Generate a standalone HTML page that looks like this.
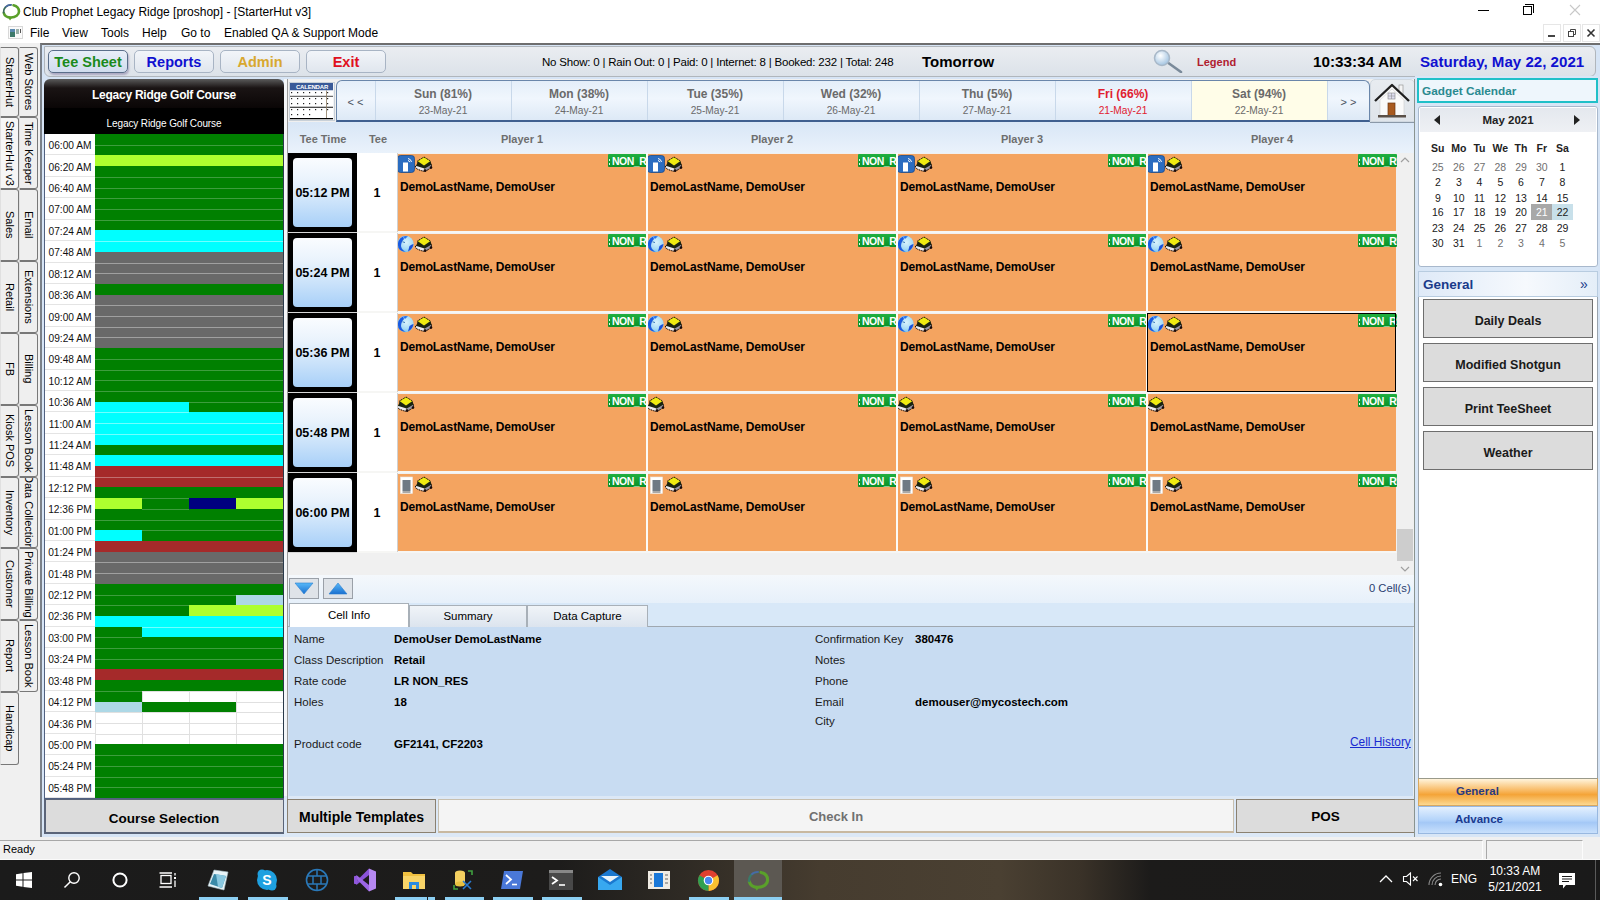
<!DOCTYPE html><html><head><meta charset="utf-8"><title>Club Prophet</title><style>
*{box-sizing:border-box;margin:0;padding:0}
html,body{width:1600px;height:900px;overflow:hidden;background:#f0f0f0;font-family:"Liberation Sans",sans-serif;color:#000}
.ab{position:absolute}
.c{display:flex;align-items:center;justify-content:center;white-space:nowrap}
.b{font-weight:bold}
</style></head><body>
<div class="ab" style="left:0px;top:0px;width:1600px;height:43px;background:#fff"></div>
<svg class="ab" style="left:1px;top:2px" width="20" height="19" viewBox="0 0 20 19">
<path d="M12.5 3.2 C16 4 18 6.5 18 9.5 C18 13 14.5 15.5 10 15.5 C6.5 15.5 3.5 13.8 2.8 11" fill="none" stroke="#5aa02a" stroke-width="2.6" stroke-linecap="round"/>
<path d="M2.6 10.5 C2.2 6 5.5 3 10 2.8" fill="none" stroke="#3a6a5a" stroke-width="1.8" stroke-linecap="round"/>
<path d="M4.5 5 C6 3.5 8 2.8 10.5 2.8" fill="none" stroke="#4a68a8" stroke-width="1.4"/>
<polygon points="6.5,14.5 9,18.5 11.5,15" fill="#5aa02a"/>
</svg>
<div class="ab" style="left:23px;top:5px;white-space:nowrap;font-size:12px;color:#000">Club Prophet Legacy Ridge [proshop] - [StarterHut v3]</div>
<div class="ab" style="left:1478px;top:10px;width:11px;height:1px;background:#000"></div>
<div class="ab" style="left:1523px;top:6px;width:9px;height:9px;border:1px solid #000;background:#fff"></div>
<div class="ab" style="left:1525px;top:4px;width:9px;height:9px;border-top:1px solid #000;border-right:1px solid #000"></div>
<svg class="ab" style="left:1569px;top:4px" width="12" height="12" viewBox="0 0 12 12"><path d="M1 1L11 11M11 1L1 11" stroke="#c8c8c8" stroke-width="1.1"/></svg>
<svg class="ab" style="left:8px;top:26px" width="15" height="13" viewBox="0 0 15 13"><rect x="0.5" y="0.5" width="14" height="12" fill="#fafafa" stroke="#d8d8d8"/><rect x="2" y="3" width="5" height="8" fill="#3e7a6a"/><rect x="2" y="3" width="5" height="3" fill="#5a8ab0"/><rect x="8" y="3" width="3" height="5" fill="#9ab0a8"/><rect x="12" y="3" width="1" height="4" fill="#555"/></svg>
<div class="ab" style="left:30px;top:26px;white-space:nowrap;font-size:12px">File</div>
<div class="ab" style="left:62px;top:26px;white-space:nowrap;font-size:12px">View</div>
<div class="ab" style="left:101px;top:26px;white-space:nowrap;font-size:12px">Tools</div>
<div class="ab" style="left:142px;top:26px;white-space:nowrap;font-size:12px">Help</div>
<div class="ab" style="left:181px;top:26px;white-space:nowrap;font-size:12px">Go to</div>
<div class="ab" style="left:224px;top:26px;white-space:nowrap;font-size:12px">Enabled QA &amp; Support Mode</div>
<div class="ab" style="left:1543px;top:24px;width:18px;height:18px;background:#fff;border:1px solid #e6e6e6"></div>
<div class="ab" style="left:1563px;top:24px;width:18px;height:18px;background:#fff;border:1px solid #e6e6e6"></div>
<div class="ab" style="left:1582px;top:24px;width:18px;height:18px;background:#fff;border:1px solid #e6e6e6"></div>
<div class="ab" style="left:1548px;top:35px;width:7px;height:2px;background:#444"></div>
<svg class="ab" style="left:1567px;top:28px" width="10" height="10" viewBox="0 0 10 10"><rect x="1.5" y="3.5" width="5" height="5" fill="none" stroke="#444"/><path d="M3.5 3.5V1.5H8.5V6.5H6.5" fill="none" stroke="#444"/></svg>
<svg class="ab" style="left:1586px;top:28px" width="10" height="10" viewBox="0 0 10 10"><path d="M1.5 1.5L8.5 8.5M8.5 1.5L1.5 8.5" stroke="#333" stroke-width="1.6"/></svg>
<div class="ab" style="left:0px;top:43px;width:40px;height:797px;background:#f0f0f0"></div>
<div class="ab" style="left:0px;top:47px;width:19px;height:70px;background:#efefef;border:1px solid #787878;border-left:1px solid #e0e0e0;border-radius:0 3px 3px 0;overflow:hidden;display:flex;align-items:center;justify-content:center"><div style="writing-mode:vertical-rl;white-space:nowrap;font-size:11px;line-height:14px;color:#000">StarterHut</div></div>
<div class="ab" style="left:0px;top:117px;width:19px;height:72px;background:#f6f6f6;border:1px solid #787878;border-left:1px solid #e0e0e0;border-radius:0 3px 3px 0;overflow:hidden;display:flex;align-items:center;justify-content:center"><div style="writing-mode:vertical-rl;white-space:nowrap;font-size:11px;line-height:14px;color:#000">StarterHut v3</div></div>
<div class="ab" style="left:0px;top:189px;width:19px;height:72px;background:#efefef;border:1px solid #787878;border-left:1px solid #e0e0e0;border-radius:0 3px 3px 0;overflow:hidden;display:flex;align-items:center;justify-content:center"><div style="writing-mode:vertical-rl;white-space:nowrap;font-size:11px;line-height:14px;color:#000">Sales</div></div>
<div class="ab" style="left:0px;top:261px;width:19px;height:72px;background:#efefef;border:1px solid #787878;border-left:1px solid #e0e0e0;border-radius:0 3px 3px 0;overflow:hidden;display:flex;align-items:center;justify-content:center"><div style="writing-mode:vertical-rl;white-space:nowrap;font-size:11px;line-height:14px;color:#000">Retail</div></div>
<div class="ab" style="left:0px;top:333px;width:19px;height:72px;background:#efefef;border:1px solid #787878;border-left:1px solid #e0e0e0;border-radius:0 3px 3px 0;overflow:hidden;display:flex;align-items:center;justify-content:center"><div style="writing-mode:vertical-rl;white-space:nowrap;font-size:11px;line-height:14px;color:#000">FB</div></div>
<div class="ab" style="left:0px;top:405px;width:19px;height:72px;background:#efefef;border:1px solid #787878;border-left:1px solid #e0e0e0;border-radius:0 3px 3px 0;overflow:hidden;display:flex;align-items:center;justify-content:center"><div style="writing-mode:vertical-rl;white-space:nowrap;font-size:11px;line-height:14px;color:#000">Kiosk POS</div></div>
<div class="ab" style="left:0px;top:477px;width:19px;height:71px;background:#efefef;border:1px solid #787878;border-left:1px solid #e0e0e0;border-radius:0 3px 3px 0;overflow:hidden;display:flex;align-items:center;justify-content:center"><div style="writing-mode:vertical-rl;white-space:nowrap;font-size:11px;line-height:14px;color:#000">Inventory</div></div>
<div class="ab" style="left:0px;top:548px;width:19px;height:72px;background:#efefef;border:1px solid #787878;border-left:1px solid #e0e0e0;border-radius:0 3px 3px 0;overflow:hidden;display:flex;align-items:center;justify-content:center"><div style="writing-mode:vertical-rl;white-space:nowrap;font-size:11px;line-height:14px;color:#000">Customer</div></div>
<div class="ab" style="left:0px;top:620px;width:19px;height:72px;background:#efefef;border:1px solid #787878;border-left:1px solid #e0e0e0;border-radius:0 3px 3px 0;overflow:hidden;display:flex;align-items:center;justify-content:center"><div style="writing-mode:vertical-rl;white-space:nowrap;font-size:11px;line-height:14px;color:#000">Report</div></div>
<div class="ab" style="left:0px;top:692px;width:19px;height:73px;background:#efefef;border:1px solid #787878;border-left:1px solid #e0e0e0;border-radius:0 3px 3px 0;overflow:hidden;display:flex;align-items:center;justify-content:center"><div style="writing-mode:vertical-rl;white-space:nowrap;font-size:11px;line-height:14px;color:#000">Handicap</div></div>
<div class="ab" style="left:19px;top:47px;width:19px;height:70px;background:#efefef;border:1px solid #787878;border-left:1px solid #e0e0e0;border-radius:0 3px 3px 0;overflow:hidden;display:flex;align-items:center;justify-content:center"><div style="writing-mode:vertical-rl;white-space:nowrap;font-size:11px;line-height:14px;color:#000">Web Stores</div></div>
<div class="ab" style="left:19px;top:117px;width:19px;height:72px;background:#efefef;border:1px solid #787878;border-left:1px solid #e0e0e0;border-radius:0 3px 3px 0;overflow:hidden;display:flex;align-items:center;justify-content:center"><div style="writing-mode:vertical-rl;white-space:nowrap;font-size:11px;line-height:14px;color:#000">Time Keeper</div></div>
<div class="ab" style="left:19px;top:189px;width:19px;height:72px;background:#efefef;border:1px solid #787878;border-left:1px solid #e0e0e0;border-radius:0 3px 3px 0;overflow:hidden;display:flex;align-items:center;justify-content:center"><div style="writing-mode:vertical-rl;white-space:nowrap;font-size:11px;line-height:14px;color:#000">Email</div></div>
<div class="ab" style="left:19px;top:261px;width:19px;height:72px;background:#efefef;border:1px solid #787878;border-left:1px solid #e0e0e0;border-radius:0 3px 3px 0;overflow:hidden;display:flex;align-items:center;justify-content:center"><div style="writing-mode:vertical-rl;white-space:nowrap;font-size:11px;line-height:14px;color:#000">Extensions</div></div>
<div class="ab" style="left:19px;top:333px;width:19px;height:72px;background:#efefef;border:1px solid #787878;border-left:1px solid #e0e0e0;border-radius:0 3px 3px 0;overflow:hidden;display:flex;align-items:center;justify-content:center"><div style="writing-mode:vertical-rl;white-space:nowrap;font-size:11px;line-height:14px;color:#000">Billing</div></div>
<div class="ab" style="left:19px;top:405px;width:19px;height:72px;background:#efefef;border:1px solid #787878;border-left:1px solid #e0e0e0;border-radius:0 3px 3px 0;overflow:hidden;display:flex;align-items:center;justify-content:center"><div style="writing-mode:vertical-rl;white-space:nowrap;font-size:11px;line-height:14px;color:#000">Lesson Book</div></div>
<div class="ab" style="left:19px;top:477px;width:19px;height:71px;background:#efefef;border:1px solid #787878;border-left:1px solid #e0e0e0;border-radius:0 3px 3px 0;overflow:hidden;display:flex;align-items:center;justify-content:center"><div style="writing-mode:vertical-rl;white-space:nowrap;font-size:11px;line-height:14px;color:#000">Data Collection</div></div>
<div class="ab" style="left:19px;top:548px;width:19px;height:72px;background:#efefef;border:1px solid #787878;border-left:1px solid #e0e0e0;border-radius:0 3px 3px 0;overflow:hidden;display:flex;align-items:center;justify-content:center"><div style="writing-mode:vertical-rl;white-space:nowrap;font-size:11px;line-height:14px;color:#000">Private Billing</div></div>
<div class="ab" style="left:19px;top:620px;width:19px;height:72px;background:#efefef;border:1px solid #787878;border-left:1px solid #e0e0e0;border-radius:0 3px 3px 0;overflow:hidden;display:flex;align-items:center;justify-content:center"><div style="writing-mode:vertical-rl;white-space:nowrap;font-size:11px;line-height:14px;color:#000">Lesson Book</div></div>
<div class="ab" style="left:40px;top:43px;width:1560px;height:794px;background:#d6e4f5;border-top:2px solid #6e6e6e;border-left:2px solid #7a8088"></div>
<div class="ab" style="left:44px;top:46px;width:1552px;height:31px;background:linear-gradient(#eaedf1,#dce2e9);border:1px solid #b0b6bc;border-radius:0 6px 6px 6px"></div>
<div class="ab c" style="left:48px;top:50px;width:80px;height:23px;border:1px solid #5a6e8a;border-radius:5px;background:linear-gradient(#e8eef8,#d0dcee);box-shadow:1px 2px 2px rgba(80,60,120,.35);font-size:14.5px;font-weight:bold;color:#1a8a1a">Tee Sheet</div>
<div class="ab c" style="left:134px;top:50px;width:80px;height:23px;border:1px solid #a8b4c4;border-radius:5px;background:linear-gradient(#f2f5f9,#e0e6ee);font-size:14.5px;font-weight:bold;color:#1010d0">Reports</div>
<div class="ab c" style="left:220px;top:50px;width:80px;height:23px;border:1px solid #a8b4c4;border-radius:5px;background:linear-gradient(#f2f5f9,#e0e6ee);font-size:14.5px;font-weight:bold;color:#d8a830">Admin</div>
<div class="ab c" style="left:306px;top:50px;width:80px;height:23px;border:1px solid #a8b4c4;border-radius:5px;background:linear-gradient(#f2f5f9,#e0e6ee);font-size:14.5px;font-weight:bold;color:#e01020">Exit</div>
<div class="ab" style="left:542px;top:56px;white-space:nowrap;font-size:11.5px;color:#000;letter-spacing:-0.2px">No Show: 0 | Rain Out: 0 | Paid: 0 | Internet: 8 | Booked: 232 | Total: 248</div>
<div class="ab" style="left:922px;top:53px;white-space:nowrap;font-size:15px;font-weight:bold">Tomorrow</div>
<svg class="ab" style="left:1151px;top:49px" width="32" height="24" viewBox="0 0 32 24"><defs><radialGradient id="mg" cx="0.4" cy="0.35" r="0.7"><stop offset="0" stop-color="#ffffff"/><stop offset="1" stop-color="#9cc0e0"/></radialGradient></defs><line x1="16" y1="13" x2="30" y2="23" stroke="#7a8a9a" stroke-width="2.6" stroke-linecap="round"/><circle cx="11" cy="9" r="7.5" fill="url(#mg)" stroke="#a8b8c8" stroke-width="1.5"/></svg>
<div class="ab" style="left:1197px;top:56px;white-space:nowrap;font-size:11px;font-weight:bold;color:#b02030">Legend</div>
<div class="ab" style="left:1313px;top:53px;white-space:nowrap;font-size:15.3px;font-weight:bold;color:#000">10:33:34 AM</div>
<div class="ab" style="left:1420px;top:53px;white-space:nowrap;font-size:15.1px;font-weight:bold;color:#1010d0">Saturday, May 22, 2021</div>
<div class="ab" style="left:44px;top:79px;width:240px;height:29px;background:linear-gradient(#5a5a5a 0px,#1a1414 9px,#0a0606 100%);border-radius:6px 6px 0 0"></div>
<div class="ab c" style="left:44px;top:81px;width:240px;height:28px;font-size:12px;font-weight:bold;color:#fff;letter-spacing:-0.25px">Legacy Ridge Golf Course</div>
<div class="ab" style="left:44px;top:108px;width:240px;height:26px;background:#000"></div>
<div class="ab c" style="left:44px;top:110px;width:240px;height:26px;font-size:10px;color:#fff;letter-spacing:-0.1px">Legacy Ridge Golf Course</div>
<div class="ab" style="left:44px;top:134px;width:240px;height:664px;background:#fff;border-right:1px solid #a8b8d0"></div>
<div class="ab c" style="left:45px;top:134.00px;width:50px;height:21.42px;padding-top:3px;font-size:10.2px;color:#111;border-bottom:1px solid #e4e4e4">06:00 AM</div>
<div class="ab c" style="left:45px;top:155.42px;width:50px;height:21.42px;padding-top:3px;font-size:10.2px;color:#111;border-bottom:1px solid #e4e4e4">06:20 AM</div>
<div class="ab c" style="left:45px;top:176.84px;width:50px;height:21.42px;padding-top:3px;font-size:10.2px;color:#111;border-bottom:1px solid #e4e4e4">06:40 AM</div>
<div class="ab c" style="left:45px;top:198.26px;width:50px;height:21.42px;padding-top:3px;font-size:10.2px;color:#111;border-bottom:1px solid #e4e4e4">07:00 AM</div>
<div class="ab c" style="left:45px;top:219.68px;width:50px;height:21.42px;padding-top:3px;font-size:10.2px;color:#111;border-bottom:1px solid #e4e4e4">07:24 AM</div>
<div class="ab c" style="left:45px;top:241.10px;width:50px;height:21.42px;padding-top:3px;font-size:10.2px;color:#111;border-bottom:1px solid #e4e4e4">07:48 AM</div>
<div class="ab c" style="left:45px;top:262.52px;width:50px;height:21.42px;padding-top:3px;font-size:10.2px;color:#111;border-bottom:1px solid #e4e4e4">08:12 AM</div>
<div class="ab c" style="left:45px;top:283.94px;width:50px;height:21.42px;padding-top:3px;font-size:10.2px;color:#111;border-bottom:1px solid #e4e4e4">08:36 AM</div>
<div class="ab c" style="left:45px;top:305.35px;width:50px;height:21.42px;padding-top:3px;font-size:10.2px;color:#111;border-bottom:1px solid #e4e4e4">09:00 AM</div>
<div class="ab c" style="left:45px;top:326.77px;width:50px;height:21.42px;padding-top:3px;font-size:10.2px;color:#111;border-bottom:1px solid #e4e4e4">09:24 AM</div>
<div class="ab c" style="left:45px;top:348.19px;width:50px;height:21.42px;padding-top:3px;font-size:10.2px;color:#111;border-bottom:1px solid #e4e4e4">09:48 AM</div>
<div class="ab c" style="left:45px;top:369.61px;width:50px;height:21.42px;padding-top:3px;font-size:10.2px;color:#111;border-bottom:1px solid #e4e4e4">10:12 AM</div>
<div class="ab c" style="left:45px;top:391.03px;width:50px;height:21.42px;padding-top:3px;font-size:10.2px;color:#111;border-bottom:1px solid #e4e4e4">10:36 AM</div>
<div class="ab c" style="left:45px;top:412.45px;width:50px;height:21.42px;padding-top:3px;font-size:10.2px;color:#111;border-bottom:1px solid #e4e4e4">11:00 AM</div>
<div class="ab c" style="left:45px;top:433.87px;width:50px;height:21.42px;padding-top:3px;font-size:10.2px;color:#111;border-bottom:1px solid #e4e4e4">11:24 AM</div>
<div class="ab c" style="left:45px;top:455.29px;width:50px;height:21.42px;padding-top:3px;font-size:10.2px;color:#111;border-bottom:1px solid #e4e4e4">11:48 AM</div>
<div class="ab c" style="left:45px;top:476.71px;width:50px;height:21.42px;padding-top:3px;font-size:10.2px;color:#111;border-bottom:1px solid #e4e4e4">12:12 PM</div>
<div class="ab c" style="left:45px;top:498.13px;width:50px;height:21.42px;padding-top:3px;font-size:10.2px;color:#111;border-bottom:1px solid #e4e4e4">12:36 PM</div>
<div class="ab c" style="left:45px;top:519.55px;width:50px;height:21.42px;padding-top:3px;font-size:10.2px;color:#111;border-bottom:1px solid #e4e4e4">01:00 PM</div>
<div class="ab c" style="left:45px;top:540.97px;width:50px;height:21.42px;padding-top:3px;font-size:10.2px;color:#111;border-bottom:1px solid #e4e4e4">01:24 PM</div>
<div class="ab c" style="left:45px;top:562.39px;width:50px;height:21.42px;padding-top:3px;font-size:10.2px;color:#111;border-bottom:1px solid #e4e4e4">01:48 PM</div>
<div class="ab c" style="left:45px;top:583.81px;width:50px;height:21.42px;padding-top:3px;font-size:10.2px;color:#111;border-bottom:1px solid #e4e4e4">02:12 PM</div>
<div class="ab c" style="left:45px;top:605.23px;width:50px;height:21.42px;padding-top:3px;font-size:10.2px;color:#111;border-bottom:1px solid #e4e4e4">02:36 PM</div>
<div class="ab c" style="left:45px;top:626.65px;width:50px;height:21.42px;padding-top:3px;font-size:10.2px;color:#111;border-bottom:1px solid #e4e4e4">03:00 PM</div>
<div class="ab c" style="left:45px;top:648.06px;width:50px;height:21.42px;padding-top:3px;font-size:10.2px;color:#111;border-bottom:1px solid #e4e4e4">03:24 PM</div>
<div class="ab c" style="left:45px;top:669.48px;width:50px;height:21.42px;padding-top:3px;font-size:10.2px;color:#111;border-bottom:1px solid #e4e4e4">03:48 PM</div>
<div class="ab c" style="left:45px;top:690.90px;width:50px;height:21.42px;padding-top:3px;font-size:10.2px;color:#111;border-bottom:1px solid #e4e4e4">04:12 PM</div>
<div class="ab c" style="left:45px;top:712.32px;width:50px;height:21.42px;padding-top:3px;font-size:10.2px;color:#111;border-bottom:1px solid #e4e4e4">04:36 PM</div>
<div class="ab c" style="left:45px;top:733.74px;width:50px;height:21.42px;padding-top:3px;font-size:10.2px;color:#111;border-bottom:1px solid #e4e4e4">05:00 PM</div>
<div class="ab c" style="left:45px;top:755.16px;width:50px;height:21.42px;padding-top:3px;font-size:10.2px;color:#111;border-bottom:1px solid #e4e4e4">05:24 PM</div>
<div class="ab c" style="left:45px;top:776.58px;width:50px;height:21.42px;padding-top:3px;font-size:10.2px;color:#111;border-bottom:1px solid #e4e4e4">05:48 PM</div>
<div class="ab" style="left:95px;top:134.00px;width:47px;height:11.21px;background:#008000;"></div>
<div class="ab" style="left:142px;top:134.00px;width:47px;height:11.21px;background:#008000;"></div>
<div class="ab" style="left:189px;top:134.00px;width:47px;height:11.21px;background:#008000;"></div>
<div class="ab" style="left:236px;top:134.00px;width:47px;height:11.21px;background:#008000;"></div>
<div class="ab" style="left:95px;top:144.71px;width:47px;height:11.21px;background:#008000;border-top:1px solid #3d9d3d;"></div>
<div class="ab" style="left:142px;top:144.71px;width:47px;height:11.21px;background:#008000;border-top:1px solid #3d9d3d;"></div>
<div class="ab" style="left:189px;top:144.71px;width:47px;height:11.21px;background:#008000;border-top:1px solid #3d9d3d;"></div>
<div class="ab" style="left:236px;top:144.71px;width:47px;height:11.21px;background:#008000;border-top:1px solid #3d9d3d;"></div>
<div class="ab" style="left:95px;top:155.42px;width:47px;height:11.21px;background:#adff2f;"></div>
<div class="ab" style="left:142px;top:155.42px;width:47px;height:11.21px;background:#adff2f;"></div>
<div class="ab" style="left:189px;top:155.42px;width:47px;height:11.21px;background:#adff2f;"></div>
<div class="ab" style="left:236px;top:155.42px;width:47px;height:11.21px;background:#adff2f;"></div>
<div class="ab" style="left:95px;top:166.13px;width:47px;height:11.21px;background:#008000;"></div>
<div class="ab" style="left:142px;top:166.13px;width:47px;height:11.21px;background:#008000;"></div>
<div class="ab" style="left:189px;top:166.13px;width:47px;height:11.21px;background:#008000;"></div>
<div class="ab" style="left:236px;top:166.13px;width:47px;height:11.21px;background:#008000;"></div>
<div class="ab" style="left:95px;top:176.84px;width:47px;height:11.21px;background:#008000;border-top:1px solid #3d9d3d;"></div>
<div class="ab" style="left:142px;top:176.84px;width:47px;height:11.21px;background:#008000;border-top:1px solid #3d9d3d;"></div>
<div class="ab" style="left:189px;top:176.84px;width:47px;height:11.21px;background:#008000;border-top:1px solid #3d9d3d;"></div>
<div class="ab" style="left:236px;top:176.84px;width:47px;height:11.21px;background:#008000;border-top:1px solid #3d9d3d;"></div>
<div class="ab" style="left:95px;top:187.55px;width:47px;height:11.21px;background:#008000;border-top:1px solid #3d9d3d;"></div>
<div class="ab" style="left:142px;top:187.55px;width:47px;height:11.21px;background:#008000;border-top:1px solid #3d9d3d;"></div>
<div class="ab" style="left:189px;top:187.55px;width:47px;height:11.21px;background:#008000;border-top:1px solid #3d9d3d;"></div>
<div class="ab" style="left:236px;top:187.55px;width:47px;height:11.21px;background:#008000;border-top:1px solid #3d9d3d;"></div>
<div class="ab" style="left:95px;top:198.26px;width:47px;height:11.21px;background:#008000;border-top:1px solid #3d9d3d;"></div>
<div class="ab" style="left:142px;top:198.26px;width:47px;height:11.21px;background:#008000;border-top:1px solid #3d9d3d;"></div>
<div class="ab" style="left:189px;top:198.26px;width:47px;height:11.21px;background:#008000;border-top:1px solid #3d9d3d;"></div>
<div class="ab" style="left:236px;top:198.26px;width:47px;height:11.21px;background:#008000;border-top:1px solid #3d9d3d;"></div>
<div class="ab" style="left:95px;top:208.97px;width:47px;height:11.21px;background:#008000;border-top:1px solid #3d9d3d;"></div>
<div class="ab" style="left:142px;top:208.97px;width:47px;height:11.21px;background:#008000;border-top:1px solid #3d9d3d;"></div>
<div class="ab" style="left:189px;top:208.97px;width:47px;height:11.21px;background:#008000;border-top:1px solid #3d9d3d;"></div>
<div class="ab" style="left:236px;top:208.97px;width:47px;height:11.21px;background:#008000;border-top:1px solid #3d9d3d;"></div>
<div class="ab" style="left:95px;top:219.68px;width:47px;height:11.21px;background:#008000;border-top:1px solid #3d9d3d;"></div>
<div class="ab" style="left:142px;top:219.68px;width:47px;height:11.21px;background:#008000;border-top:1px solid #3d9d3d;"></div>
<div class="ab" style="left:189px;top:219.68px;width:47px;height:11.21px;background:#008000;border-top:1px solid #3d9d3d;"></div>
<div class="ab" style="left:236px;top:219.68px;width:47px;height:11.21px;background:#008000;border-top:1px solid #3d9d3d;"></div>
<div class="ab" style="left:95px;top:230.39px;width:47px;height:11.21px;background:#00ffff;"></div>
<div class="ab" style="left:142px;top:230.39px;width:47px;height:11.21px;background:#00ffff;"></div>
<div class="ab" style="left:189px;top:230.39px;width:47px;height:11.21px;background:#00ffff;"></div>
<div class="ab" style="left:236px;top:230.39px;width:47px;height:11.21px;background:#00ffff;"></div>
<div class="ab" style="left:95px;top:241.10px;width:47px;height:11.21px;background:#00ffff;border-top:1px solid #70ffff;"></div>
<div class="ab" style="left:142px;top:241.10px;width:47px;height:11.21px;background:#00ffff;border-top:1px solid #70ffff;"></div>
<div class="ab" style="left:189px;top:241.10px;width:47px;height:11.21px;background:#00ffff;border-top:1px solid #70ffff;"></div>
<div class="ab" style="left:236px;top:241.10px;width:47px;height:11.21px;background:#00ffff;border-top:1px solid #70ffff;"></div>
<div class="ab" style="left:95px;top:251.81px;width:47px;height:11.21px;background:#696969;"></div>
<div class="ab" style="left:142px;top:251.81px;width:47px;height:11.21px;background:#696969;"></div>
<div class="ab" style="left:189px;top:251.81px;width:47px;height:11.21px;background:#696969;"></div>
<div class="ab" style="left:236px;top:251.81px;width:47px;height:11.21px;background:#696969;"></div>
<div class="ab" style="left:95px;top:262.52px;width:47px;height:11.21px;background:#696969;border-top:1px solid #a0a0a0;"></div>
<div class="ab" style="left:142px;top:262.52px;width:47px;height:11.21px;background:#696969;border-top:1px solid #a0a0a0;"></div>
<div class="ab" style="left:189px;top:262.52px;width:47px;height:11.21px;background:#696969;border-top:1px solid #a0a0a0;"></div>
<div class="ab" style="left:236px;top:262.52px;width:47px;height:11.21px;background:#696969;border-top:1px solid #a0a0a0;"></div>
<div class="ab" style="left:95px;top:273.23px;width:47px;height:11.21px;background:#696969;border-top:1px solid #a0a0a0;"></div>
<div class="ab" style="left:142px;top:273.23px;width:47px;height:11.21px;background:#696969;border-top:1px solid #a0a0a0;"></div>
<div class="ab" style="left:189px;top:273.23px;width:47px;height:11.21px;background:#696969;border-top:1px solid #a0a0a0;"></div>
<div class="ab" style="left:236px;top:273.23px;width:47px;height:11.21px;background:#696969;border-top:1px solid #a0a0a0;"></div>
<div class="ab" style="left:95px;top:283.94px;width:47px;height:11.21px;background:#008000;"></div>
<div class="ab" style="left:142px;top:283.94px;width:47px;height:11.21px;background:#008000;"></div>
<div class="ab" style="left:189px;top:283.94px;width:47px;height:11.21px;background:#008000;"></div>
<div class="ab" style="left:236px;top:283.94px;width:47px;height:11.21px;background:#008000;"></div>
<div class="ab" style="left:95px;top:294.65px;width:47px;height:11.21px;background:#696969;"></div>
<div class="ab" style="left:142px;top:294.65px;width:47px;height:11.21px;background:#696969;"></div>
<div class="ab" style="left:189px;top:294.65px;width:47px;height:11.21px;background:#696969;"></div>
<div class="ab" style="left:236px;top:294.65px;width:47px;height:11.21px;background:#696969;"></div>
<div class="ab" style="left:95px;top:305.35px;width:47px;height:11.21px;background:#696969;border-top:1px solid #a0a0a0;"></div>
<div class="ab" style="left:142px;top:305.35px;width:47px;height:11.21px;background:#696969;border-top:1px solid #a0a0a0;"></div>
<div class="ab" style="left:189px;top:305.35px;width:47px;height:11.21px;background:#696969;border-top:1px solid #a0a0a0;"></div>
<div class="ab" style="left:236px;top:305.35px;width:47px;height:11.21px;background:#696969;border-top:1px solid #a0a0a0;"></div>
<div class="ab" style="left:95px;top:316.06px;width:47px;height:11.21px;background:#696969;border-top:1px solid #a0a0a0;"></div>
<div class="ab" style="left:142px;top:316.06px;width:47px;height:11.21px;background:#696969;border-top:1px solid #a0a0a0;"></div>
<div class="ab" style="left:189px;top:316.06px;width:47px;height:11.21px;background:#696969;border-top:1px solid #a0a0a0;"></div>
<div class="ab" style="left:236px;top:316.06px;width:47px;height:11.21px;background:#696969;border-top:1px solid #a0a0a0;"></div>
<div class="ab" style="left:95px;top:326.77px;width:47px;height:11.21px;background:#696969;border-top:1px solid #a0a0a0;"></div>
<div class="ab" style="left:142px;top:326.77px;width:47px;height:11.21px;background:#696969;border-top:1px solid #a0a0a0;"></div>
<div class="ab" style="left:189px;top:326.77px;width:47px;height:11.21px;background:#696969;border-top:1px solid #a0a0a0;"></div>
<div class="ab" style="left:236px;top:326.77px;width:47px;height:11.21px;background:#696969;border-top:1px solid #a0a0a0;"></div>
<div class="ab" style="left:95px;top:337.48px;width:47px;height:11.21px;background:#696969;border-top:1px solid #a0a0a0;"></div>
<div class="ab" style="left:142px;top:337.48px;width:47px;height:11.21px;background:#696969;border-top:1px solid #a0a0a0;"></div>
<div class="ab" style="left:189px;top:337.48px;width:47px;height:11.21px;background:#696969;border-top:1px solid #a0a0a0;"></div>
<div class="ab" style="left:236px;top:337.48px;width:47px;height:11.21px;background:#696969;border-top:1px solid #a0a0a0;"></div>
<div class="ab" style="left:95px;top:348.19px;width:47px;height:11.21px;background:#008000;"></div>
<div class="ab" style="left:142px;top:348.19px;width:47px;height:11.21px;background:#008000;"></div>
<div class="ab" style="left:189px;top:348.19px;width:47px;height:11.21px;background:#008000;"></div>
<div class="ab" style="left:236px;top:348.19px;width:47px;height:11.21px;background:#008000;"></div>
<div class="ab" style="left:95px;top:358.90px;width:47px;height:11.21px;background:#008000;border-top:1px solid #3d9d3d;"></div>
<div class="ab" style="left:142px;top:358.90px;width:47px;height:11.21px;background:#008000;border-top:1px solid #3d9d3d;"></div>
<div class="ab" style="left:189px;top:358.90px;width:47px;height:11.21px;background:#008000;border-top:1px solid #3d9d3d;"></div>
<div class="ab" style="left:236px;top:358.90px;width:47px;height:11.21px;background:#008000;border-top:1px solid #3d9d3d;"></div>
<div class="ab" style="left:95px;top:369.61px;width:47px;height:11.21px;background:#008000;border-top:1px solid #3d9d3d;"></div>
<div class="ab" style="left:142px;top:369.61px;width:47px;height:11.21px;background:#008000;border-top:1px solid #3d9d3d;"></div>
<div class="ab" style="left:189px;top:369.61px;width:47px;height:11.21px;background:#008000;border-top:1px solid #3d9d3d;"></div>
<div class="ab" style="left:236px;top:369.61px;width:47px;height:11.21px;background:#008000;border-top:1px solid #3d9d3d;"></div>
<div class="ab" style="left:95px;top:380.32px;width:47px;height:11.21px;background:#008000;border-top:1px solid #3d9d3d;"></div>
<div class="ab" style="left:142px;top:380.32px;width:47px;height:11.21px;background:#008000;border-top:1px solid #3d9d3d;"></div>
<div class="ab" style="left:189px;top:380.32px;width:47px;height:11.21px;background:#008000;border-top:1px solid #3d9d3d;"></div>
<div class="ab" style="left:236px;top:380.32px;width:47px;height:11.21px;background:#008000;border-top:1px solid #3d9d3d;"></div>
<div class="ab" style="left:95px;top:391.03px;width:47px;height:11.21px;background:#008000;border-top:1px solid #3d9d3d;"></div>
<div class="ab" style="left:142px;top:391.03px;width:47px;height:11.21px;background:#008000;border-top:1px solid #3d9d3d;"></div>
<div class="ab" style="left:189px;top:391.03px;width:47px;height:11.21px;background:#008000;border-top:1px solid #3d9d3d;"></div>
<div class="ab" style="left:236px;top:391.03px;width:47px;height:11.21px;background:#008000;border-top:1px solid #3d9d3d;"></div>
<div class="ab" style="left:95px;top:401.74px;width:47px;height:11.21px;background:#00ffff;"></div>
<div class="ab" style="left:142px;top:401.74px;width:47px;height:11.21px;background:#00ffff;"></div>
<div class="ab" style="left:189px;top:401.74px;width:47px;height:11.21px;background:#008000;border-top:1px solid #3d9d3d;"></div>
<div class="ab" style="left:236px;top:401.74px;width:47px;height:11.21px;background:#008000;border-top:1px solid #3d9d3d;"></div>
<div class="ab" style="left:95px;top:412.45px;width:47px;height:11.21px;background:#00ffff;border-top:1px solid #70ffff;"></div>
<div class="ab" style="left:142px;top:412.45px;width:47px;height:11.21px;background:#00ffff;border-top:1px solid #70ffff;"></div>
<div class="ab" style="left:189px;top:412.45px;width:47px;height:11.21px;background:#00ffff;"></div>
<div class="ab" style="left:236px;top:412.45px;width:47px;height:11.21px;background:#00ffff;"></div>
<div class="ab" style="left:95px;top:423.16px;width:47px;height:11.21px;background:#00ffff;border-top:1px solid #70ffff;"></div>
<div class="ab" style="left:142px;top:423.16px;width:47px;height:11.21px;background:#00ffff;border-top:1px solid #70ffff;"></div>
<div class="ab" style="left:189px;top:423.16px;width:47px;height:11.21px;background:#00ffff;border-top:1px solid #70ffff;"></div>
<div class="ab" style="left:236px;top:423.16px;width:47px;height:11.21px;background:#00ffff;border-top:1px solid #70ffff;"></div>
<div class="ab" style="left:95px;top:433.87px;width:47px;height:11.21px;background:#00ffff;border-top:1px solid #70ffff;"></div>
<div class="ab" style="left:142px;top:433.87px;width:47px;height:11.21px;background:#00ffff;border-top:1px solid #70ffff;"></div>
<div class="ab" style="left:189px;top:433.87px;width:47px;height:11.21px;background:#00ffff;border-top:1px solid #70ffff;"></div>
<div class="ab" style="left:236px;top:433.87px;width:47px;height:11.21px;background:#00ffff;border-top:1px solid #70ffff;"></div>
<div class="ab" style="left:95px;top:444.58px;width:47px;height:11.21px;background:#008000;"></div>
<div class="ab" style="left:142px;top:444.58px;width:47px;height:11.21px;background:#008000;"></div>
<div class="ab" style="left:189px;top:444.58px;width:47px;height:11.21px;background:#008000;"></div>
<div class="ab" style="left:236px;top:444.58px;width:47px;height:11.21px;background:#008000;"></div>
<div class="ab" style="left:95px;top:455.29px;width:47px;height:11.21px;background:#00ffff;"></div>
<div class="ab" style="left:142px;top:455.29px;width:47px;height:11.21px;background:#00ffff;"></div>
<div class="ab" style="left:189px;top:455.29px;width:47px;height:11.21px;background:#00ffff;"></div>
<div class="ab" style="left:236px;top:455.29px;width:47px;height:11.21px;background:#00ffff;"></div>
<div class="ab" style="left:95px;top:466.00px;width:47px;height:11.21px;background:#a52a2a;"></div>
<div class="ab" style="left:142px;top:466.00px;width:47px;height:11.21px;background:#a52a2a;"></div>
<div class="ab" style="left:189px;top:466.00px;width:47px;height:11.21px;background:#a52a2a;"></div>
<div class="ab" style="left:236px;top:466.00px;width:47px;height:11.21px;background:#a52a2a;"></div>
<div class="ab" style="left:95px;top:476.71px;width:47px;height:11.21px;background:#a52a2a;border-top:1px solid #c07070;"></div>
<div class="ab" style="left:142px;top:476.71px;width:47px;height:11.21px;background:#a52a2a;border-top:1px solid #c07070;"></div>
<div class="ab" style="left:189px;top:476.71px;width:47px;height:11.21px;background:#a52a2a;border-top:1px solid #c07070;"></div>
<div class="ab" style="left:236px;top:476.71px;width:47px;height:11.21px;background:#a52a2a;border-top:1px solid #c07070;"></div>
<div class="ab" style="left:95px;top:487.42px;width:47px;height:11.21px;background:#008000;"></div>
<div class="ab" style="left:142px;top:487.42px;width:47px;height:11.21px;background:#008000;"></div>
<div class="ab" style="left:189px;top:487.42px;width:47px;height:11.21px;background:#008000;"></div>
<div class="ab" style="left:236px;top:487.42px;width:47px;height:11.21px;background:#008000;"></div>
<div class="ab" style="left:95px;top:498.13px;width:47px;height:11.21px;background:#adff2f;"></div>
<div class="ab" style="left:142px;top:498.13px;width:47px;height:11.21px;background:#008000;border-top:1px solid #3d9d3d;"></div>
<div class="ab" style="left:189px;top:498.13px;width:47px;height:11.21px;background:#000080;"></div>
<div class="ab" style="left:236px;top:498.13px;width:47px;height:11.21px;background:#adff2f;"></div>
<div class="ab" style="left:95px;top:508.84px;width:47px;height:11.21px;background:#008000;"></div>
<div class="ab" style="left:142px;top:508.84px;width:47px;height:11.21px;background:#008000;border-top:1px solid #3d9d3d;"></div>
<div class="ab" style="left:189px;top:508.84px;width:47px;height:11.21px;background:#008000;"></div>
<div class="ab" style="left:236px;top:508.84px;width:47px;height:11.21px;background:#008000;"></div>
<div class="ab" style="left:95px;top:519.55px;width:47px;height:11.21px;background:#008000;border-top:1px solid #3d9d3d;"></div>
<div class="ab" style="left:142px;top:519.55px;width:47px;height:11.21px;background:#008000;border-top:1px solid #3d9d3d;"></div>
<div class="ab" style="left:189px;top:519.55px;width:47px;height:11.21px;background:#008000;border-top:1px solid #3d9d3d;"></div>
<div class="ab" style="left:236px;top:519.55px;width:47px;height:11.21px;background:#008000;border-top:1px solid #3d9d3d;"></div>
<div class="ab" style="left:95px;top:530.26px;width:47px;height:11.21px;background:#00ffff;"></div>
<div class="ab" style="left:142px;top:530.26px;width:47px;height:11.21px;background:#008000;border-top:1px solid #3d9d3d;"></div>
<div class="ab" style="left:189px;top:530.26px;width:47px;height:11.21px;background:#008000;border-top:1px solid #3d9d3d;"></div>
<div class="ab" style="left:236px;top:530.26px;width:47px;height:11.21px;background:#008000;border-top:1px solid #3d9d3d;"></div>
<div class="ab" style="left:95px;top:540.97px;width:47px;height:11.21px;background:#a52a2a;"></div>
<div class="ab" style="left:142px;top:540.97px;width:47px;height:11.21px;background:#a52a2a;"></div>
<div class="ab" style="left:189px;top:540.97px;width:47px;height:11.21px;background:#a52a2a;"></div>
<div class="ab" style="left:236px;top:540.97px;width:47px;height:11.21px;background:#a52a2a;"></div>
<div class="ab" style="left:95px;top:551.68px;width:47px;height:11.21px;background:#696969;"></div>
<div class="ab" style="left:142px;top:551.68px;width:47px;height:11.21px;background:#696969;"></div>
<div class="ab" style="left:189px;top:551.68px;width:47px;height:11.21px;background:#696969;"></div>
<div class="ab" style="left:236px;top:551.68px;width:47px;height:11.21px;background:#696969;"></div>
<div class="ab" style="left:95px;top:562.39px;width:47px;height:11.21px;background:#696969;border-top:1px solid #a0a0a0;"></div>
<div class="ab" style="left:142px;top:562.39px;width:47px;height:11.21px;background:#696969;border-top:1px solid #a0a0a0;"></div>
<div class="ab" style="left:189px;top:562.39px;width:47px;height:11.21px;background:#696969;border-top:1px solid #a0a0a0;"></div>
<div class="ab" style="left:236px;top:562.39px;width:47px;height:11.21px;background:#696969;border-top:1px solid #a0a0a0;"></div>
<div class="ab" style="left:95px;top:573.10px;width:47px;height:11.21px;background:#696969;border-top:1px solid #a0a0a0;"></div>
<div class="ab" style="left:142px;top:573.10px;width:47px;height:11.21px;background:#696969;border-top:1px solid #a0a0a0;"></div>
<div class="ab" style="left:189px;top:573.10px;width:47px;height:11.21px;background:#696969;border-top:1px solid #a0a0a0;"></div>
<div class="ab" style="left:236px;top:573.10px;width:47px;height:11.21px;background:#696969;border-top:1px solid #a0a0a0;"></div>
<div class="ab" style="left:95px;top:583.81px;width:47px;height:11.21px;background:#008000;"></div>
<div class="ab" style="left:142px;top:583.81px;width:47px;height:11.21px;background:#008000;"></div>
<div class="ab" style="left:189px;top:583.81px;width:47px;height:11.21px;background:#008000;"></div>
<div class="ab" style="left:236px;top:583.81px;width:47px;height:11.21px;background:#008000;"></div>
<div class="ab" style="left:95px;top:594.52px;width:47px;height:11.21px;background:#008000;border-top:1px solid #3d9d3d;"></div>
<div class="ab" style="left:142px;top:594.52px;width:47px;height:11.21px;background:#008000;border-top:1px solid #3d9d3d;"></div>
<div class="ab" style="left:189px;top:594.52px;width:47px;height:11.21px;background:#008000;border-top:1px solid #3d9d3d;"></div>
<div class="ab" style="left:236px;top:594.52px;width:47px;height:11.21px;background:#add8e6;"></div>
<div class="ab" style="left:95px;top:605.23px;width:47px;height:11.21px;background:#008000;border-top:1px solid #3d9d3d;"></div>
<div class="ab" style="left:142px;top:605.23px;width:47px;height:11.21px;background:#008000;border-top:1px solid #3d9d3d;"></div>
<div class="ab" style="left:189px;top:605.23px;width:47px;height:11.21px;background:#adff2f;"></div>
<div class="ab" style="left:236px;top:605.23px;width:47px;height:11.21px;background:#adff2f;"></div>
<div class="ab" style="left:95px;top:615.94px;width:47px;height:11.21px;background:#00ffff;"></div>
<div class="ab" style="left:142px;top:615.94px;width:47px;height:11.21px;background:#00ffff;"></div>
<div class="ab" style="left:189px;top:615.94px;width:47px;height:11.21px;background:#00ffff;"></div>
<div class="ab" style="left:236px;top:615.94px;width:47px;height:11.21px;background:#00ffff;"></div>
<div class="ab" style="left:95px;top:626.65px;width:47px;height:11.21px;background:#008000;"></div>
<div class="ab" style="left:142px;top:626.65px;width:47px;height:11.21px;background:#00ffff;border-top:1px solid #70ffff;"></div>
<div class="ab" style="left:189px;top:626.65px;width:47px;height:11.21px;background:#00ffff;border-top:1px solid #70ffff;"></div>
<div class="ab" style="left:236px;top:626.65px;width:47px;height:11.21px;background:#00ffff;border-top:1px solid #70ffff;"></div>
<div class="ab" style="left:95px;top:637.35px;width:47px;height:11.21px;background:#008000;border-top:1px solid #3d9d3d;"></div>
<div class="ab" style="left:142px;top:637.35px;width:47px;height:11.21px;background:#008000;"></div>
<div class="ab" style="left:189px;top:637.35px;width:47px;height:11.21px;background:#008000;"></div>
<div class="ab" style="left:236px;top:637.35px;width:47px;height:11.21px;background:#008000;"></div>
<div class="ab" style="left:95px;top:648.06px;width:47px;height:11.21px;background:#008000;border-top:1px solid #3d9d3d;"></div>
<div class="ab" style="left:142px;top:648.06px;width:47px;height:11.21px;background:#008000;border-top:1px solid #3d9d3d;"></div>
<div class="ab" style="left:189px;top:648.06px;width:47px;height:11.21px;background:#008000;border-top:1px solid #3d9d3d;"></div>
<div class="ab" style="left:236px;top:648.06px;width:47px;height:11.21px;background:#008000;border-top:1px solid #3d9d3d;"></div>
<div class="ab" style="left:95px;top:658.77px;width:47px;height:11.21px;background:#008000;border-top:1px solid #3d9d3d;"></div>
<div class="ab" style="left:142px;top:658.77px;width:47px;height:11.21px;background:#008000;border-top:1px solid #3d9d3d;"></div>
<div class="ab" style="left:189px;top:658.77px;width:47px;height:11.21px;background:#008000;border-top:1px solid #3d9d3d;"></div>
<div class="ab" style="left:236px;top:658.77px;width:47px;height:11.21px;background:#008000;border-top:1px solid #3d9d3d;"></div>
<div class="ab" style="left:95px;top:669.48px;width:47px;height:11.21px;background:#a52a2a;"></div>
<div class="ab" style="left:142px;top:669.48px;width:47px;height:11.21px;background:#a52a2a;"></div>
<div class="ab" style="left:189px;top:669.48px;width:47px;height:11.21px;background:#a52a2a;"></div>
<div class="ab" style="left:236px;top:669.48px;width:47px;height:11.21px;background:#a52a2a;"></div>
<div class="ab" style="left:95px;top:680.19px;width:47px;height:11.21px;background:#008000;"></div>
<div class="ab" style="left:142px;top:680.19px;width:47px;height:11.21px;background:#008000;"></div>
<div class="ab" style="left:189px;top:680.19px;width:47px;height:11.21px;background:#008000;"></div>
<div class="ab" style="left:236px;top:680.19px;width:47px;height:11.21px;background:#008000;"></div>
<div class="ab" style="left:95px;top:690.90px;width:47px;height:11.21px;background:#008000;border-top:1px solid #3d9d3d;"></div>
<div class="ab" style="left:142px;top:690.90px;width:47px;height:11.21px;background:#ffffff;border-top:1px solid #e0e0e0;border-left:1px solid #e0e0e0;"></div>
<div class="ab" style="left:189px;top:690.90px;width:47px;height:11.21px;background:#ffffff;border-top:1px solid #e0e0e0;border-left:1px solid #e0e0e0;"></div>
<div class="ab" style="left:236px;top:690.90px;width:47px;height:11.21px;background:#ffffff;border-top:1px solid #e0e0e0;border-left:1px solid #e0e0e0;"></div>
<div class="ab" style="left:95px;top:701.61px;width:47px;height:11.21px;background:#add8e6;"></div>
<div class="ab" style="left:142px;top:701.61px;width:47px;height:11.21px;background:#008000;"></div>
<div class="ab" style="left:189px;top:701.61px;width:47px;height:11.21px;background:#008000;"></div>
<div class="ab" style="left:236px;top:701.61px;width:47px;height:11.21px;background:#ffffff;border-top:1px solid #e0e0e0;border-left:1px solid #e0e0e0;"></div>
<div class="ab" style="left:95px;top:712.32px;width:47px;height:11.21px;background:#ffffff;border-top:1px solid #e0e0e0;border-left:1px solid #e0e0e0;"></div>
<div class="ab" style="left:142px;top:712.32px;width:47px;height:11.21px;background:#ffffff;border-top:1px solid #e0e0e0;border-left:1px solid #e0e0e0;"></div>
<div class="ab" style="left:189px;top:712.32px;width:47px;height:11.21px;background:#ffffff;border-top:1px solid #e0e0e0;border-left:1px solid #e0e0e0;"></div>
<div class="ab" style="left:236px;top:712.32px;width:47px;height:11.21px;background:#ffffff;border-top:1px solid #e0e0e0;border-left:1px solid #e0e0e0;"></div>
<div class="ab" style="left:95px;top:723.03px;width:47px;height:11.21px;background:#ffffff;border-top:1px solid #e0e0e0;border-left:1px solid #e0e0e0;"></div>
<div class="ab" style="left:142px;top:723.03px;width:47px;height:11.21px;background:#ffffff;border-top:1px solid #e0e0e0;border-left:1px solid #e0e0e0;"></div>
<div class="ab" style="left:189px;top:723.03px;width:47px;height:11.21px;background:#ffffff;border-top:1px solid #e0e0e0;border-left:1px solid #e0e0e0;"></div>
<div class="ab" style="left:236px;top:723.03px;width:47px;height:11.21px;background:#ffffff;border-top:1px solid #e0e0e0;border-left:1px solid #e0e0e0;"></div>
<div class="ab" style="left:95px;top:733.74px;width:47px;height:11.21px;background:#ffffff;border-top:1px solid #e0e0e0;border-left:1px solid #e0e0e0;"></div>
<div class="ab" style="left:142px;top:733.74px;width:47px;height:11.21px;background:#ffffff;border-top:1px solid #e0e0e0;border-left:1px solid #e0e0e0;"></div>
<div class="ab" style="left:189px;top:733.74px;width:47px;height:11.21px;background:#ffffff;border-top:1px solid #e0e0e0;border-left:1px solid #e0e0e0;"></div>
<div class="ab" style="left:236px;top:733.74px;width:47px;height:11.21px;background:#ffffff;border-top:1px solid #e0e0e0;border-left:1px solid #e0e0e0;"></div>
<div class="ab" style="left:95px;top:744.45px;width:47px;height:11.21px;background:#008000;"></div>
<div class="ab" style="left:142px;top:744.45px;width:47px;height:11.21px;background:#008000;"></div>
<div class="ab" style="left:189px;top:744.45px;width:47px;height:11.21px;background:#008000;"></div>
<div class="ab" style="left:236px;top:744.45px;width:47px;height:11.21px;background:#008000;"></div>
<div class="ab" style="left:95px;top:755.16px;width:47px;height:11.21px;background:#008000;border-top:1px solid #3d9d3d;"></div>
<div class="ab" style="left:142px;top:755.16px;width:47px;height:11.21px;background:#008000;border-top:1px solid #3d9d3d;"></div>
<div class="ab" style="left:189px;top:755.16px;width:47px;height:11.21px;background:#008000;border-top:1px solid #3d9d3d;"></div>
<div class="ab" style="left:236px;top:755.16px;width:47px;height:11.21px;background:#008000;border-top:1px solid #3d9d3d;"></div>
<div class="ab" style="left:95px;top:765.87px;width:47px;height:11.21px;background:#008000;border-top:1px solid #3d9d3d;"></div>
<div class="ab" style="left:142px;top:765.87px;width:47px;height:11.21px;background:#008000;border-top:1px solid #3d9d3d;"></div>
<div class="ab" style="left:189px;top:765.87px;width:47px;height:11.21px;background:#008000;border-top:1px solid #3d9d3d;"></div>
<div class="ab" style="left:236px;top:765.87px;width:47px;height:11.21px;background:#008000;border-top:1px solid #3d9d3d;"></div>
<div class="ab" style="left:95px;top:776.58px;width:47px;height:11.21px;background:#008000;border-top:1px solid #3d9d3d;"></div>
<div class="ab" style="left:142px;top:776.58px;width:47px;height:11.21px;background:#008000;border-top:1px solid #3d9d3d;"></div>
<div class="ab" style="left:189px;top:776.58px;width:47px;height:11.21px;background:#008000;border-top:1px solid #3d9d3d;"></div>
<div class="ab" style="left:236px;top:776.58px;width:47px;height:11.21px;background:#008000;border-top:1px solid #3d9d3d;"></div>
<div class="ab" style="left:95px;top:787.29px;width:47px;height:11.21px;background:#008000;border-top:1px solid #3d9d3d;"></div>
<div class="ab" style="left:142px;top:787.29px;width:47px;height:11.21px;background:#008000;border-top:1px solid #3d9d3d;"></div>
<div class="ab" style="left:189px;top:787.29px;width:47px;height:11.21px;background:#008000;border-top:1px solid #3d9d3d;"></div>
<div class="ab" style="left:236px;top:787.29px;width:47px;height:11.21px;background:#008000;border-top:1px solid #3d9d3d;"></div>
<div class="ab" style="left:283px;top:134px;width:1px;height:664px;background:#2a3a4a"></div>
<div class="ab" style="left:44px;top:134px;width:1px;height:665px;background:#506080"></div>
<div class="ab" style="left:44px;top:798px;width:240px;height:1px;background:#506080"></div>
<div class="ab" style="left:284px;top:79px;width:3px;height:720px;background:#f4f6f8"></div>
<div class="ab" style="left:44px;top:799px;width:240px;height:35px;background:#dcdcdc;border:1px solid #5a6478;border-left:2px solid #5a6478;border-bottom:2px solid #5a6478"></div>
<div class="ab c" style="left:44px;top:801px;width:240px;height:34px;font-size:13.5px;font-weight:bold;color:#000">Course Selection</div>
<div class="ab" style="left:287px;top:79px;width:1128px;height:496px;background:#f0f0f0"></div>
<svg class="ab" style="left:289px;top:82px" width="46" height="39" viewBox="0 0 46 39">
<rect x="0.5" y="0.5" width="45" height="38" fill="#f2f4f6" stroke="#c8d0d8"/>
<g transform="translate(1,1)">
<rect x="0" y="0" width="43" height="7.5" fill="#3a5a98"/>
<text x="22" y="6.3" font-family="Liberation Sans" font-size="6" font-weight="bold" fill="#fff" text-anchor="middle" letter-spacing="-0.2">CALENDAR</text>
<rect x="0" y="7.5" width="43" height="29" fill="#fff"/>
<line x1="0" y1="13.3" x2="43" y2="13.3" stroke="#333" stroke-width="0.9"/>
<line x1="0" y1="24.3" x2="43" y2="24.3" stroke="#111" stroke-width="1.1"/>
<line x1="0" y1="35.6" x2="43" y2="35.6" stroke="#000" stroke-width="1.4"/>
<line x1="36.5" y1="7.5" x2="36.5" y2="35" stroke="#8a7a60" stroke-width="0.8"/>
<g fill="#222"><rect x="1" y="9.0" width="1.2" height="1.2"/><rect x="7" y="9.0" width="1.2" height="1.2"/><rect x="13" y="9.0" width="1.2" height="1.2"/><rect x="19" y="9.0" width="1.2" height="1.2"/><rect x="25" y="9.0" width="1.2" height="1.2"/><rect x="31" y="9.0" width="1.2" height="1.2"/><rect x="37" y="9.0" width="1.2" height="1.2"/><rect x="1" y="15.0" width="1.2" height="1.2"/><rect x="7" y="15.0" width="1.2" height="1.2"/><rect x="13" y="15.0" width="1.2" height="1.2"/><rect x="19" y="15.0" width="1.2" height="1.2"/><rect x="25" y="15.0" width="1.2" height="1.2"/><rect x="31" y="15.0" width="1.2" height="1.2"/><rect x="37" y="15.0" width="1.2" height="1.2"/><rect x="1" y="20.0" width="1.2" height="1.2"/><rect x="7" y="20.0" width="1.2" height="1.2"/><rect x="13" y="20.0" width="1.2" height="1.2"/><rect x="19" y="20.0" width="1.2" height="1.2"/><rect x="25" y="20.0" width="1.2" height="1.2"/><rect x="31" y="20.0" width="1.2" height="1.2"/><rect x="37" y="20.0" width="1.2" height="1.2"/><rect x="1" y="26.0" width="1.2" height="1.2"/><rect x="7" y="26.0" width="1.2" height="1.2"/><rect x="13" y="26.0" width="1.2" height="1.2"/><rect x="19" y="26.0" width="1.2" height="1.2"/><rect x="25" y="26.0" width="1.2" height="1.2"/><rect x="31" y="26.0" width="1.2" height="1.2"/><rect x="37" y="26.0" width="1.2" height="1.2"/><rect x="1" y="31" width="1.2" height="1.2"/><rect x="7" y="31" width="1.2" height="1.2"/><rect x="13" y="31" width="1.2" height="1.2"/><rect x="19" y="31" width="1.2" height="1.2"/></g></g>
</svg>
<div class="ab" style="left:336px;top:80px;width:1034px;height:42px;background:linear-gradient(#e4eef9,#f0f6fd 45%,#dde9f6);border:1px solid #6a86aa;border-bottom:2px solid #3f5f8f;border-radius:6px 6px 0 0"></div>
<div class="ab c" style="left:336px;top:82px;width:39px;height:40px;font-size:11px;color:#4a5260">&lt; &lt;</div>
<div class="ab" style="left:375px;top:81px;width:1px;height:39px;background:#c8d8ea"></div>
<div class="ab" style="left:511px;top:81px;width:1px;height:39px;background:#c8d8ea"></div>
<div class="ab c" style="left:375px;top:85px;width:136px;height:18px;font-size:12px;font-weight:bold;color:#6a6a6a">Sun (81%)</div>
<div class="ab c" style="left:375px;top:103px;width:136px;height:15px;font-size:10.2px;color:#6a6a6a">23-May-21</div>
<div class="ab" style="left:647px;top:81px;width:1px;height:39px;background:#c8d8ea"></div>
<div class="ab c" style="left:511px;top:85px;width:136px;height:18px;font-size:12px;font-weight:bold;color:#6a6a6a">Mon (38%)</div>
<div class="ab c" style="left:511px;top:103px;width:136px;height:15px;font-size:10.2px;color:#6a6a6a">24-May-21</div>
<div class="ab" style="left:783px;top:81px;width:1px;height:39px;background:#c8d8ea"></div>
<div class="ab c" style="left:647px;top:85px;width:136px;height:18px;font-size:12px;font-weight:bold;color:#6a6a6a">Tue (35%)</div>
<div class="ab c" style="left:647px;top:103px;width:136px;height:15px;font-size:10.2px;color:#6a6a6a">25-May-21</div>
<div class="ab" style="left:919px;top:81px;width:1px;height:39px;background:#c8d8ea"></div>
<div class="ab c" style="left:783px;top:85px;width:136px;height:18px;font-size:12px;font-weight:bold;color:#6a6a6a">Wed (32%)</div>
<div class="ab c" style="left:783px;top:103px;width:136px;height:15px;font-size:10.2px;color:#6a6a6a">26-May-21</div>
<div class="ab" style="left:1055px;top:81px;width:1px;height:39px;background:#c8d8ea"></div>
<div class="ab c" style="left:919px;top:85px;width:136px;height:18px;font-size:12px;font-weight:bold;color:#6a6a6a">Thu (5%)</div>
<div class="ab c" style="left:919px;top:103px;width:136px;height:15px;font-size:10.2px;color:#6a6a6a">27-May-21</div>
<div class="ab" style="left:1191px;top:81px;width:1px;height:39px;background:#c8d8ea"></div>
<div class="ab c" style="left:1055px;top:85px;width:136px;height:18px;font-size:12px;font-weight:bold;color:#e02030">Fri (66%)</div>
<div class="ab c" style="left:1055px;top:103px;width:136px;height:15px;font-size:10.2px;color:#e02030">21-May-21</div>
<div class="ab" style="left:1192px;top:81px;width:135px;height:39px;background:#fffde8"></div>
<div class="ab c" style="left:1191px;top:85px;width:136px;height:18px;font-size:12px;font-weight:bold;color:#6a6a6a">Sat (94%)</div>
<div class="ab c" style="left:1191px;top:103px;width:136px;height:15px;font-size:10.2px;color:#6a6a6a">22-May-21</div>
<div class="ab" style="left:1327px;top:81px;width:1px;height:39px;background:#c8d8ea"></div>
<div class="ab c" style="left:1327px;top:82px;width:43px;height:40px;font-size:11px;color:#4a5260">&gt; &gt;</div>
<div class="ab" style="left:1370px;top:79px;width:45px;height:43px;background:linear-gradient(#e8ecf0,#dfe4ea);border:1px solid #d0d8e0;border-radius:5px 5px 0 0"></div>
<svg class="ab" style="left:1373px;top:82px" width="38" height="37" viewBox="0 0 38 37">
<rect x="26" y="3" width="4" height="10" fill="#f4f4f4" stroke="#999" stroke-width="0.7"/>
<polygon points="19,3 3,18 7,18 7,34 31,34 31,18 35,18" fill="#f8f8f8"/>
<polygon points="7,18 19,7 31,18 31,34 7,34" fill="#fafafa" stroke="#cfcfcf" stroke-width="0.6"/>
<path d="M2 19 L19 3 L36 19" fill="none" stroke="#202020" stroke-width="2.4" stroke-linejoin="round"/>
<rect x="15" y="21" width="7" height="13" fill="#a85a20" stroke="#6a3410" stroke-width="0.7"/>
<rect x="15" y="11" width="7" height="6" fill="#dde" stroke="#888" stroke-width="0.6"/>
<line x1="18.5" y1="11" x2="18.5" y2="17" stroke="#888" stroke-width="0.5"/><line x1="15" y1="14" x2="22" y2="14" stroke="#888" stroke-width="0.5"/>
<rect x="5" y="33" width="28" height="2.5" fill="#5a5048"/>
</svg>
<div class="ab" style="left:288px;top:122px;width:1126px;height:31px;background:linear-gradient(#d8e6f6,#eaf2fb)"></div>
<div class="ab" style="left:1370px;top:122px;width:44px;height:1px;background:#8a98a8"></div>
<div class="ab c" style="left:263px;top:124px;width:120px;height:29px;font-size:11px;font-weight:bold;color:#6e6e6e">Tee Time</div>
<div class="ab c" style="left:318px;top:124px;width:120px;height:29px;font-size:11px;font-weight:bold;color:#6e6e6e">Tee</div>
<div class="ab c" style="left:462px;top:124px;width:120px;height:29px;font-size:11px;font-weight:bold;color:#6e6e6e">Player 1</div>
<div class="ab c" style="left:712px;top:124px;width:120px;height:29px;font-size:11px;font-weight:bold;color:#6e6e6e">Player 2</div>
<div class="ab c" style="left:962px;top:124px;width:120px;height:29px;font-size:11px;font-weight:bold;color:#6e6e6e">Player 3</div>
<div class="ab c" style="left:1212px;top:124px;width:120px;height:29px;font-size:11px;font-weight:bold;color:#6e6e6e">Player 4</div>
<div class="ab" style="left:1397px;top:153px;width:17px;height:422px;background:#f0f0f0"></div>
<div class="ab" style="left:1397px;top:529px;width:16px;height:32px;background:#cdcdcd"></div>
<svg class="ab" style="left:1400px;top:156px" width="10" height="8" viewBox="0 0 10 8"><path d="M1 6L5 2L9 6" fill="none" stroke="#a0a0a0" stroke-width="1.2"/></svg>
<svg class="ab" style="left:1400px;top:565px" width="10" height="8" viewBox="0 0 10 8"><path d="M1 2L5 6L9 2" fill="none" stroke="#a0a0a0" stroke-width="1.2"/></svg>
<div class="ab" style="left:288px;top:153px;width:69px;height:79px;background:#000"></div>
<div class="ab c" style="left:293px;top:158px;width:59px;height:69px;border-radius:4px;background:linear-gradient(#fafcff,#e8f2fc 35%,#a8d0f8);font-size:12.5px;font-weight:bold;color:#000">05:12 PM</div>
<div class="ab" style="left:357px;top:153px;width:40px;height:79px;background:#fff"></div>
<div class="ab c" style="left:357px;top:153px;width:40px;height:79px;font-size:12.5px;font-weight:bold">1</div>
<div class="ab" style="left:357px;top:231px;width:1040px;height:2px;background:#f6f6f4"></div>
<div class="ab" style="left:288px;top:232px;width:69px;height:1px;background:#d8d8d8"></div>
<div class="ab" style="left:398px;top:154px;width:248px;height:77px;background:#f4a460"></div>
<div class="ab" style="left:400px;top:180px;white-space:nowrap;font-size:12px;font-weight:bold;color:#000;letter-spacing:-0.12px">DemoLastName, DemoUser</div>
<div class="ab" style="left:608px;top:154px;width:39px;height:13px;background:linear-gradient(#20b040,#0a9028);overflow:hidden;border-radius:1px"><div class="ab" style="left:1px;top:5px;width:1px;height:2px;background:#dfe"></div><div class="ab" style="left:1px;top:9px;width:1px;height:2px;background:#dfe"></div><div class="ab" style="left:4px;top:1px;white-space:nowrap;font-size:10.5px;line-height:13px;font-weight:bold;color:#fff;letter-spacing:-0.5px">NON_RES</div></div>
<svg class="ab" style="left:397px;top:155px" width="18" height="18" viewBox="0 0 18 18">
<rect x="0.5" y="0.5" width="17" height="17" rx="3" fill="#2a6cc0" stroke="#1a4a8a" stroke-width="0.8"/>
<rect x="6" y="7.5" width="5" height="9" fill="#fff"/>
<path d="M11 3.5 Q14 4 14.5 7" fill="none" stroke="#fff" stroke-width="1"/><path d="M11 5.5 Q12.5 5.8 12.8 7.2" fill="none" stroke="#fff" stroke-width="1"/>
</svg>
<svg class="ab" style="left:415px;top:156px" width="18" height="16" viewBox="0 0 18 16">
<polygon points="2.5,5 9,1 15.5,5 16.5,8.5 16.5,11 10,15.5 1,12.5 0.5,10 2,8" fill="#1a2410"/>
<polygon points="0.8,9.8 9.5,12.5 10,15.5 2,13 0.3,11" fill="#ecebf0"/>
<polygon points="9.8,12.4 16.2,8.8 16.3,11.2 10.2,15" fill="#9a98a8"/>
<polygon points="2.5,5 9,1 15.5,5 9,9.5" fill="#f0ec10"/>
<path d="M2.5 5 L9 1 L15.5 5 M0.5 10 L0.8 12 L3 13.5 L9.5 15.8 M16.5 8.5 L16.5 11.5 L10.5 15.5" fill="none" stroke="#100808" stroke-width="1" stroke-dasharray="1.1 0.8"/>
<circle cx="10" cy="14.6" r="1.4" fill="#1a0a08"/><circle cx="16" cy="11.6" r="1.3" fill="#1a0a08"/>
</svg>
<div class="ab" style="left:648px;top:154px;width:248px;height:77px;background:#f4a460"></div>
<div class="ab" style="left:650px;top:180px;white-space:nowrap;font-size:12px;font-weight:bold;color:#000;letter-spacing:-0.12px">DemoLastName, DemoUser</div>
<div class="ab" style="left:858px;top:154px;width:39px;height:13px;background:linear-gradient(#20b040,#0a9028);overflow:hidden;border-radius:1px"><div class="ab" style="left:1px;top:5px;width:1px;height:2px;background:#dfe"></div><div class="ab" style="left:1px;top:9px;width:1px;height:2px;background:#dfe"></div><div class="ab" style="left:4px;top:1px;white-space:nowrap;font-size:10.5px;line-height:13px;font-weight:bold;color:#fff;letter-spacing:-0.5px">NON_RES</div></div>
<svg class="ab" style="left:647px;top:155px" width="18" height="18" viewBox="0 0 18 18">
<rect x="0.5" y="0.5" width="17" height="17" rx="3" fill="#2a6cc0" stroke="#1a4a8a" stroke-width="0.8"/>
<rect x="6" y="7.5" width="5" height="9" fill="#fff"/>
<path d="M11 3.5 Q14 4 14.5 7" fill="none" stroke="#fff" stroke-width="1"/><path d="M11 5.5 Q12.5 5.8 12.8 7.2" fill="none" stroke="#fff" stroke-width="1"/>
</svg>
<svg class="ab" style="left:665px;top:156px" width="18" height="16" viewBox="0 0 18 16">
<polygon points="2.5,5 9,1 15.5,5 16.5,8.5 16.5,11 10,15.5 1,12.5 0.5,10 2,8" fill="#1a2410"/>
<polygon points="0.8,9.8 9.5,12.5 10,15.5 2,13 0.3,11" fill="#ecebf0"/>
<polygon points="9.8,12.4 16.2,8.8 16.3,11.2 10.2,15" fill="#9a98a8"/>
<polygon points="2.5,5 9,1 15.5,5 9,9.5" fill="#f0ec10"/>
<path d="M2.5 5 L9 1 L15.5 5 M0.5 10 L0.8 12 L3 13.5 L9.5 15.8 M16.5 8.5 L16.5 11.5 L10.5 15.5" fill="none" stroke="#100808" stroke-width="1" stroke-dasharray="1.1 0.8"/>
<circle cx="10" cy="14.6" r="1.4" fill="#1a0a08"/><circle cx="16" cy="11.6" r="1.3" fill="#1a0a08"/>
</svg>
<div class="ab" style="left:898px;top:154px;width:248px;height:77px;background:#f4a460"></div>
<div class="ab" style="left:900px;top:180px;white-space:nowrap;font-size:12px;font-weight:bold;color:#000;letter-spacing:-0.12px">DemoLastName, DemoUser</div>
<div class="ab" style="left:1108px;top:154px;width:39px;height:13px;background:linear-gradient(#20b040,#0a9028);overflow:hidden;border-radius:1px"><div class="ab" style="left:1px;top:5px;width:1px;height:2px;background:#dfe"></div><div class="ab" style="left:1px;top:9px;width:1px;height:2px;background:#dfe"></div><div class="ab" style="left:4px;top:1px;white-space:nowrap;font-size:10.5px;line-height:13px;font-weight:bold;color:#fff;letter-spacing:-0.5px">NON_RES</div></div>
<svg class="ab" style="left:897px;top:155px" width="18" height="18" viewBox="0 0 18 18">
<rect x="0.5" y="0.5" width="17" height="17" rx="3" fill="#2a6cc0" stroke="#1a4a8a" stroke-width="0.8"/>
<rect x="6" y="7.5" width="5" height="9" fill="#fff"/>
<path d="M11 3.5 Q14 4 14.5 7" fill="none" stroke="#fff" stroke-width="1"/><path d="M11 5.5 Q12.5 5.8 12.8 7.2" fill="none" stroke="#fff" stroke-width="1"/>
</svg>
<svg class="ab" style="left:915px;top:156px" width="18" height="16" viewBox="0 0 18 16">
<polygon points="2.5,5 9,1 15.5,5 16.5,8.5 16.5,11 10,15.5 1,12.5 0.5,10 2,8" fill="#1a2410"/>
<polygon points="0.8,9.8 9.5,12.5 10,15.5 2,13 0.3,11" fill="#ecebf0"/>
<polygon points="9.8,12.4 16.2,8.8 16.3,11.2 10.2,15" fill="#9a98a8"/>
<polygon points="2.5,5 9,1 15.5,5 9,9.5" fill="#f0ec10"/>
<path d="M2.5 5 L9 1 L15.5 5 M0.5 10 L0.8 12 L3 13.5 L9.5 15.8 M16.5 8.5 L16.5 11.5 L10.5 15.5" fill="none" stroke="#100808" stroke-width="1" stroke-dasharray="1.1 0.8"/>
<circle cx="10" cy="14.6" r="1.4" fill="#1a0a08"/><circle cx="16" cy="11.6" r="1.3" fill="#1a0a08"/>
</svg>
<div class="ab" style="left:1148px;top:154px;width:248px;height:77px;background:#f4a460"></div>
<div class="ab" style="left:1150px;top:180px;white-space:nowrap;font-size:12px;font-weight:bold;color:#000;letter-spacing:-0.12px">DemoLastName, DemoUser</div>
<div class="ab" style="left:1358px;top:154px;width:39px;height:13px;background:linear-gradient(#20b040,#0a9028);overflow:hidden;border-radius:1px"><div class="ab" style="left:1px;top:5px;width:1px;height:2px;background:#dfe"></div><div class="ab" style="left:1px;top:9px;width:1px;height:2px;background:#dfe"></div><div class="ab" style="left:4px;top:1px;white-space:nowrap;font-size:10.5px;line-height:13px;font-weight:bold;color:#fff;letter-spacing:-0.5px">NON_RES</div></div>
<svg class="ab" style="left:1147px;top:155px" width="18" height="18" viewBox="0 0 18 18">
<rect x="0.5" y="0.5" width="17" height="17" rx="3" fill="#2a6cc0" stroke="#1a4a8a" stroke-width="0.8"/>
<rect x="6" y="7.5" width="5" height="9" fill="#fff"/>
<path d="M11 3.5 Q14 4 14.5 7" fill="none" stroke="#fff" stroke-width="1"/><path d="M11 5.5 Q12.5 5.8 12.8 7.2" fill="none" stroke="#fff" stroke-width="1"/>
</svg>
<svg class="ab" style="left:1165px;top:156px" width="18" height="16" viewBox="0 0 18 16">
<polygon points="2.5,5 9,1 15.5,5 16.5,8.5 16.5,11 10,15.5 1,12.5 0.5,10 2,8" fill="#1a2410"/>
<polygon points="0.8,9.8 9.5,12.5 10,15.5 2,13 0.3,11" fill="#ecebf0"/>
<polygon points="9.8,12.4 16.2,8.8 16.3,11.2 10.2,15" fill="#9a98a8"/>
<polygon points="2.5,5 9,1 15.5,5 9,9.5" fill="#f0ec10"/>
<path d="M2.5 5 L9 1 L15.5 5 M0.5 10 L0.8 12 L3 13.5 L9.5 15.8 M16.5 8.5 L16.5 11.5 L10.5 15.5" fill="none" stroke="#100808" stroke-width="1" stroke-dasharray="1.1 0.8"/>
<circle cx="10" cy="14.6" r="1.4" fill="#1a0a08"/><circle cx="16" cy="11.6" r="1.3" fill="#1a0a08"/>
</svg>
<div class="ab" style="left:646px;top:153px;width:2px;height:78px;background:#fbfbf8"></div>
<div class="ab" style="left:896px;top:153px;width:2px;height:78px;background:#fbfbf8"></div>
<div class="ab" style="left:1146px;top:153px;width:2px;height:78px;background:#fbfbf8"></div>
<div class="ab" style="left:397px;top:153px;width:1px;height:79px;background:#d0d0d0"></div>
<div class="ab" style="left:288px;top:233px;width:69px;height:79px;background:#000"></div>
<div class="ab c" style="left:293px;top:238px;width:59px;height:69px;border-radius:4px;background:linear-gradient(#fafcff,#e8f2fc 35%,#a8d0f8);font-size:12.5px;font-weight:bold;color:#000">05:24 PM</div>
<div class="ab" style="left:357px;top:233px;width:40px;height:79px;background:#fff"></div>
<div class="ab c" style="left:357px;top:233px;width:40px;height:79px;font-size:12.5px;font-weight:bold">1</div>
<div class="ab" style="left:357px;top:311px;width:1040px;height:2px;background:#f6f6f4"></div>
<div class="ab" style="left:288px;top:312px;width:69px;height:1px;background:#d8d8d8"></div>
<div class="ab" style="left:398px;top:234px;width:248px;height:77px;background:#f4a460"></div>
<div class="ab" style="left:400px;top:260px;white-space:nowrap;font-size:12px;font-weight:bold;color:#000;letter-spacing:-0.12px">DemoLastName, DemoUser</div>
<div class="ab" style="left:608px;top:234px;width:39px;height:13px;background:linear-gradient(#20b040,#0a9028);overflow:hidden;border-radius:1px"><div class="ab" style="left:1px;top:5px;width:1px;height:2px;background:#dfe"></div><div class="ab" style="left:1px;top:9px;width:1px;height:2px;background:#dfe"></div><div class="ab" style="left:4px;top:1px;white-space:nowrap;font-size:10.5px;line-height:13px;font-weight:bold;color:#fff;letter-spacing:-0.5px">NON_RES</div></div>
<svg class="ab" style="left:397px;top:235px" width="18" height="18" viewBox="0 0 18 18">
<defs><radialGradient id="gl" cx="0.55" cy="0.4" r="0.65"><stop offset="0" stop-color="#d8f2fc"/><stop offset="0.6" stop-color="#a8dcf6"/><stop offset="1" stop-color="#6ab8ec"/></radialGradient></defs>
<circle cx="8.5" cy="9" r="8.2" fill="url(#gl)"/>
<path d="M1.5 6 Q3 2.5 6 1.5 L7 4 Q5 6 4.5 8 Q3 12 6 15 Q8 17 9 16.8 Q4 17 1.5 13 Q0 9 1.5 6Z" fill="#1a5ae0"/>
<path d="M16.5 9 Q16 14 11 16.5 Q12 13 12.5 11 Q14.5 9.5 16.5 9Z" fill="#1a50d8"/>
<path d="M6 1.5 Q9 0.5 11 1.5 Q9 2.5 8 4Z" fill="#2a70e8"/>
<path d="M5.5 6.8 Q7 7.2 8 7.6" stroke="#2a6ab0" stroke-width="0.9" fill="none"/>
</svg>
<svg class="ab" style="left:415px;top:236px" width="18" height="16" viewBox="0 0 18 16">
<polygon points="2.5,5 9,1 15.5,5 16.5,8.5 16.5,11 10,15.5 1,12.5 0.5,10 2,8" fill="#1a2410"/>
<polygon points="0.8,9.8 9.5,12.5 10,15.5 2,13 0.3,11" fill="#ecebf0"/>
<polygon points="9.8,12.4 16.2,8.8 16.3,11.2 10.2,15" fill="#9a98a8"/>
<polygon points="2.5,5 9,1 15.5,5 9,9.5" fill="#f0ec10"/>
<path d="M2.5 5 L9 1 L15.5 5 M0.5 10 L0.8 12 L3 13.5 L9.5 15.8 M16.5 8.5 L16.5 11.5 L10.5 15.5" fill="none" stroke="#100808" stroke-width="1" stroke-dasharray="1.1 0.8"/>
<circle cx="10" cy="14.6" r="1.4" fill="#1a0a08"/><circle cx="16" cy="11.6" r="1.3" fill="#1a0a08"/>
</svg>
<div class="ab" style="left:648px;top:234px;width:248px;height:77px;background:#f4a460"></div>
<div class="ab" style="left:650px;top:260px;white-space:nowrap;font-size:12px;font-weight:bold;color:#000;letter-spacing:-0.12px">DemoLastName, DemoUser</div>
<div class="ab" style="left:858px;top:234px;width:39px;height:13px;background:linear-gradient(#20b040,#0a9028);overflow:hidden;border-radius:1px"><div class="ab" style="left:1px;top:5px;width:1px;height:2px;background:#dfe"></div><div class="ab" style="left:1px;top:9px;width:1px;height:2px;background:#dfe"></div><div class="ab" style="left:4px;top:1px;white-space:nowrap;font-size:10.5px;line-height:13px;font-weight:bold;color:#fff;letter-spacing:-0.5px">NON_RES</div></div>
<svg class="ab" style="left:647px;top:235px" width="18" height="18" viewBox="0 0 18 18">
<defs><radialGradient id="gl" cx="0.55" cy="0.4" r="0.65"><stop offset="0" stop-color="#d8f2fc"/><stop offset="0.6" stop-color="#a8dcf6"/><stop offset="1" stop-color="#6ab8ec"/></radialGradient></defs>
<circle cx="8.5" cy="9" r="8.2" fill="url(#gl)"/>
<path d="M1.5 6 Q3 2.5 6 1.5 L7 4 Q5 6 4.5 8 Q3 12 6 15 Q8 17 9 16.8 Q4 17 1.5 13 Q0 9 1.5 6Z" fill="#1a5ae0"/>
<path d="M16.5 9 Q16 14 11 16.5 Q12 13 12.5 11 Q14.5 9.5 16.5 9Z" fill="#1a50d8"/>
<path d="M6 1.5 Q9 0.5 11 1.5 Q9 2.5 8 4Z" fill="#2a70e8"/>
<path d="M5.5 6.8 Q7 7.2 8 7.6" stroke="#2a6ab0" stroke-width="0.9" fill="none"/>
</svg>
<svg class="ab" style="left:665px;top:236px" width="18" height="16" viewBox="0 0 18 16">
<polygon points="2.5,5 9,1 15.5,5 16.5,8.5 16.5,11 10,15.5 1,12.5 0.5,10 2,8" fill="#1a2410"/>
<polygon points="0.8,9.8 9.5,12.5 10,15.5 2,13 0.3,11" fill="#ecebf0"/>
<polygon points="9.8,12.4 16.2,8.8 16.3,11.2 10.2,15" fill="#9a98a8"/>
<polygon points="2.5,5 9,1 15.5,5 9,9.5" fill="#f0ec10"/>
<path d="M2.5 5 L9 1 L15.5 5 M0.5 10 L0.8 12 L3 13.5 L9.5 15.8 M16.5 8.5 L16.5 11.5 L10.5 15.5" fill="none" stroke="#100808" stroke-width="1" stroke-dasharray="1.1 0.8"/>
<circle cx="10" cy="14.6" r="1.4" fill="#1a0a08"/><circle cx="16" cy="11.6" r="1.3" fill="#1a0a08"/>
</svg>
<div class="ab" style="left:898px;top:234px;width:248px;height:77px;background:#f4a460"></div>
<div class="ab" style="left:900px;top:260px;white-space:nowrap;font-size:12px;font-weight:bold;color:#000;letter-spacing:-0.12px">DemoLastName, DemoUser</div>
<div class="ab" style="left:1108px;top:234px;width:39px;height:13px;background:linear-gradient(#20b040,#0a9028);overflow:hidden;border-radius:1px"><div class="ab" style="left:1px;top:5px;width:1px;height:2px;background:#dfe"></div><div class="ab" style="left:1px;top:9px;width:1px;height:2px;background:#dfe"></div><div class="ab" style="left:4px;top:1px;white-space:nowrap;font-size:10.5px;line-height:13px;font-weight:bold;color:#fff;letter-spacing:-0.5px">NON_RES</div></div>
<svg class="ab" style="left:897px;top:235px" width="18" height="18" viewBox="0 0 18 18">
<defs><radialGradient id="gl" cx="0.55" cy="0.4" r="0.65"><stop offset="0" stop-color="#d8f2fc"/><stop offset="0.6" stop-color="#a8dcf6"/><stop offset="1" stop-color="#6ab8ec"/></radialGradient></defs>
<circle cx="8.5" cy="9" r="8.2" fill="url(#gl)"/>
<path d="M1.5 6 Q3 2.5 6 1.5 L7 4 Q5 6 4.5 8 Q3 12 6 15 Q8 17 9 16.8 Q4 17 1.5 13 Q0 9 1.5 6Z" fill="#1a5ae0"/>
<path d="M16.5 9 Q16 14 11 16.5 Q12 13 12.5 11 Q14.5 9.5 16.5 9Z" fill="#1a50d8"/>
<path d="M6 1.5 Q9 0.5 11 1.5 Q9 2.5 8 4Z" fill="#2a70e8"/>
<path d="M5.5 6.8 Q7 7.2 8 7.6" stroke="#2a6ab0" stroke-width="0.9" fill="none"/>
</svg>
<svg class="ab" style="left:915px;top:236px" width="18" height="16" viewBox="0 0 18 16">
<polygon points="2.5,5 9,1 15.5,5 16.5,8.5 16.5,11 10,15.5 1,12.5 0.5,10 2,8" fill="#1a2410"/>
<polygon points="0.8,9.8 9.5,12.5 10,15.5 2,13 0.3,11" fill="#ecebf0"/>
<polygon points="9.8,12.4 16.2,8.8 16.3,11.2 10.2,15" fill="#9a98a8"/>
<polygon points="2.5,5 9,1 15.5,5 9,9.5" fill="#f0ec10"/>
<path d="M2.5 5 L9 1 L15.5 5 M0.5 10 L0.8 12 L3 13.5 L9.5 15.8 M16.5 8.5 L16.5 11.5 L10.5 15.5" fill="none" stroke="#100808" stroke-width="1" stroke-dasharray="1.1 0.8"/>
<circle cx="10" cy="14.6" r="1.4" fill="#1a0a08"/><circle cx="16" cy="11.6" r="1.3" fill="#1a0a08"/>
</svg>
<div class="ab" style="left:1148px;top:234px;width:248px;height:77px;background:#f4a460"></div>
<div class="ab" style="left:1150px;top:260px;white-space:nowrap;font-size:12px;font-weight:bold;color:#000;letter-spacing:-0.12px">DemoLastName, DemoUser</div>
<div class="ab" style="left:1358px;top:234px;width:39px;height:13px;background:linear-gradient(#20b040,#0a9028);overflow:hidden;border-radius:1px"><div class="ab" style="left:1px;top:5px;width:1px;height:2px;background:#dfe"></div><div class="ab" style="left:1px;top:9px;width:1px;height:2px;background:#dfe"></div><div class="ab" style="left:4px;top:1px;white-space:nowrap;font-size:10.5px;line-height:13px;font-weight:bold;color:#fff;letter-spacing:-0.5px">NON_RES</div></div>
<svg class="ab" style="left:1147px;top:235px" width="18" height="18" viewBox="0 0 18 18">
<defs><radialGradient id="gl" cx="0.55" cy="0.4" r="0.65"><stop offset="0" stop-color="#d8f2fc"/><stop offset="0.6" stop-color="#a8dcf6"/><stop offset="1" stop-color="#6ab8ec"/></radialGradient></defs>
<circle cx="8.5" cy="9" r="8.2" fill="url(#gl)"/>
<path d="M1.5 6 Q3 2.5 6 1.5 L7 4 Q5 6 4.5 8 Q3 12 6 15 Q8 17 9 16.8 Q4 17 1.5 13 Q0 9 1.5 6Z" fill="#1a5ae0"/>
<path d="M16.5 9 Q16 14 11 16.5 Q12 13 12.5 11 Q14.5 9.5 16.5 9Z" fill="#1a50d8"/>
<path d="M6 1.5 Q9 0.5 11 1.5 Q9 2.5 8 4Z" fill="#2a70e8"/>
<path d="M5.5 6.8 Q7 7.2 8 7.6" stroke="#2a6ab0" stroke-width="0.9" fill="none"/>
</svg>
<svg class="ab" style="left:1165px;top:236px" width="18" height="16" viewBox="0 0 18 16">
<polygon points="2.5,5 9,1 15.5,5 16.5,8.5 16.5,11 10,15.5 1,12.5 0.5,10 2,8" fill="#1a2410"/>
<polygon points="0.8,9.8 9.5,12.5 10,15.5 2,13 0.3,11" fill="#ecebf0"/>
<polygon points="9.8,12.4 16.2,8.8 16.3,11.2 10.2,15" fill="#9a98a8"/>
<polygon points="2.5,5 9,1 15.5,5 9,9.5" fill="#f0ec10"/>
<path d="M2.5 5 L9 1 L15.5 5 M0.5 10 L0.8 12 L3 13.5 L9.5 15.8 M16.5 8.5 L16.5 11.5 L10.5 15.5" fill="none" stroke="#100808" stroke-width="1" stroke-dasharray="1.1 0.8"/>
<circle cx="10" cy="14.6" r="1.4" fill="#1a0a08"/><circle cx="16" cy="11.6" r="1.3" fill="#1a0a08"/>
</svg>
<div class="ab" style="left:646px;top:233px;width:2px;height:78px;background:#fbfbf8"></div>
<div class="ab" style="left:896px;top:233px;width:2px;height:78px;background:#fbfbf8"></div>
<div class="ab" style="left:1146px;top:233px;width:2px;height:78px;background:#fbfbf8"></div>
<div class="ab" style="left:397px;top:233px;width:1px;height:79px;background:#d0d0d0"></div>
<div class="ab" style="left:288px;top:313px;width:69px;height:79px;background:#000"></div>
<div class="ab c" style="left:293px;top:318px;width:59px;height:69px;border-radius:4px;background:linear-gradient(#fafcff,#e8f2fc 35%,#a8d0f8);font-size:12.5px;font-weight:bold;color:#000">05:36 PM</div>
<div class="ab" style="left:357px;top:313px;width:40px;height:79px;background:#fff"></div>
<div class="ab c" style="left:357px;top:313px;width:40px;height:79px;font-size:12.5px;font-weight:bold">1</div>
<div class="ab" style="left:357px;top:391px;width:1040px;height:2px;background:#f6f6f4"></div>
<div class="ab" style="left:288px;top:392px;width:69px;height:1px;background:#d8d8d8"></div>
<div class="ab" style="left:398px;top:314px;width:248px;height:77px;background:#f4a460"></div>
<div class="ab" style="left:400px;top:340px;white-space:nowrap;font-size:12px;font-weight:bold;color:#000;letter-spacing:-0.12px">DemoLastName, DemoUser</div>
<div class="ab" style="left:608px;top:314px;width:39px;height:13px;background:linear-gradient(#20b040,#0a9028);overflow:hidden;border-radius:1px"><div class="ab" style="left:1px;top:5px;width:1px;height:2px;background:#dfe"></div><div class="ab" style="left:1px;top:9px;width:1px;height:2px;background:#dfe"></div><div class="ab" style="left:4px;top:1px;white-space:nowrap;font-size:10.5px;line-height:13px;font-weight:bold;color:#fff;letter-spacing:-0.5px">NON_RES</div></div>
<svg class="ab" style="left:397px;top:315px" width="18" height="18" viewBox="0 0 18 18">
<defs><radialGradient id="gl" cx="0.55" cy="0.4" r="0.65"><stop offset="0" stop-color="#d8f2fc"/><stop offset="0.6" stop-color="#a8dcf6"/><stop offset="1" stop-color="#6ab8ec"/></radialGradient></defs>
<circle cx="8.5" cy="9" r="8.2" fill="url(#gl)"/>
<path d="M1.5 6 Q3 2.5 6 1.5 L7 4 Q5 6 4.5 8 Q3 12 6 15 Q8 17 9 16.8 Q4 17 1.5 13 Q0 9 1.5 6Z" fill="#1a5ae0"/>
<path d="M16.5 9 Q16 14 11 16.5 Q12 13 12.5 11 Q14.5 9.5 16.5 9Z" fill="#1a50d8"/>
<path d="M6 1.5 Q9 0.5 11 1.5 Q9 2.5 8 4Z" fill="#2a70e8"/>
<path d="M5.5 6.8 Q7 7.2 8 7.6" stroke="#2a6ab0" stroke-width="0.9" fill="none"/>
</svg>
<svg class="ab" style="left:415px;top:316px" width="18" height="16" viewBox="0 0 18 16">
<polygon points="2.5,5 9,1 15.5,5 16.5,8.5 16.5,11 10,15.5 1,12.5 0.5,10 2,8" fill="#1a2410"/>
<polygon points="0.8,9.8 9.5,12.5 10,15.5 2,13 0.3,11" fill="#ecebf0"/>
<polygon points="9.8,12.4 16.2,8.8 16.3,11.2 10.2,15" fill="#9a98a8"/>
<polygon points="2.5,5 9,1 15.5,5 9,9.5" fill="#f0ec10"/>
<path d="M2.5 5 L9 1 L15.5 5 M0.5 10 L0.8 12 L3 13.5 L9.5 15.8 M16.5 8.5 L16.5 11.5 L10.5 15.5" fill="none" stroke="#100808" stroke-width="1" stroke-dasharray="1.1 0.8"/>
<circle cx="10" cy="14.6" r="1.4" fill="#1a0a08"/><circle cx="16" cy="11.6" r="1.3" fill="#1a0a08"/>
</svg>
<div class="ab" style="left:648px;top:314px;width:248px;height:77px;background:#f4a460"></div>
<div class="ab" style="left:650px;top:340px;white-space:nowrap;font-size:12px;font-weight:bold;color:#000;letter-spacing:-0.12px">DemoLastName, DemoUser</div>
<div class="ab" style="left:858px;top:314px;width:39px;height:13px;background:linear-gradient(#20b040,#0a9028);overflow:hidden;border-radius:1px"><div class="ab" style="left:1px;top:5px;width:1px;height:2px;background:#dfe"></div><div class="ab" style="left:1px;top:9px;width:1px;height:2px;background:#dfe"></div><div class="ab" style="left:4px;top:1px;white-space:nowrap;font-size:10.5px;line-height:13px;font-weight:bold;color:#fff;letter-spacing:-0.5px">NON_RES</div></div>
<svg class="ab" style="left:647px;top:315px" width="18" height="18" viewBox="0 0 18 18">
<defs><radialGradient id="gl" cx="0.55" cy="0.4" r="0.65"><stop offset="0" stop-color="#d8f2fc"/><stop offset="0.6" stop-color="#a8dcf6"/><stop offset="1" stop-color="#6ab8ec"/></radialGradient></defs>
<circle cx="8.5" cy="9" r="8.2" fill="url(#gl)"/>
<path d="M1.5 6 Q3 2.5 6 1.5 L7 4 Q5 6 4.5 8 Q3 12 6 15 Q8 17 9 16.8 Q4 17 1.5 13 Q0 9 1.5 6Z" fill="#1a5ae0"/>
<path d="M16.5 9 Q16 14 11 16.5 Q12 13 12.5 11 Q14.5 9.5 16.5 9Z" fill="#1a50d8"/>
<path d="M6 1.5 Q9 0.5 11 1.5 Q9 2.5 8 4Z" fill="#2a70e8"/>
<path d="M5.5 6.8 Q7 7.2 8 7.6" stroke="#2a6ab0" stroke-width="0.9" fill="none"/>
</svg>
<svg class="ab" style="left:665px;top:316px" width="18" height="16" viewBox="0 0 18 16">
<polygon points="2.5,5 9,1 15.5,5 16.5,8.5 16.5,11 10,15.5 1,12.5 0.5,10 2,8" fill="#1a2410"/>
<polygon points="0.8,9.8 9.5,12.5 10,15.5 2,13 0.3,11" fill="#ecebf0"/>
<polygon points="9.8,12.4 16.2,8.8 16.3,11.2 10.2,15" fill="#9a98a8"/>
<polygon points="2.5,5 9,1 15.5,5 9,9.5" fill="#f0ec10"/>
<path d="M2.5 5 L9 1 L15.5 5 M0.5 10 L0.8 12 L3 13.5 L9.5 15.8 M16.5 8.5 L16.5 11.5 L10.5 15.5" fill="none" stroke="#100808" stroke-width="1" stroke-dasharray="1.1 0.8"/>
<circle cx="10" cy="14.6" r="1.4" fill="#1a0a08"/><circle cx="16" cy="11.6" r="1.3" fill="#1a0a08"/>
</svg>
<div class="ab" style="left:898px;top:314px;width:248px;height:77px;background:#f4a460"></div>
<div class="ab" style="left:900px;top:340px;white-space:nowrap;font-size:12px;font-weight:bold;color:#000;letter-spacing:-0.12px">DemoLastName, DemoUser</div>
<div class="ab" style="left:1108px;top:314px;width:39px;height:13px;background:linear-gradient(#20b040,#0a9028);overflow:hidden;border-radius:1px"><div class="ab" style="left:1px;top:5px;width:1px;height:2px;background:#dfe"></div><div class="ab" style="left:1px;top:9px;width:1px;height:2px;background:#dfe"></div><div class="ab" style="left:4px;top:1px;white-space:nowrap;font-size:10.5px;line-height:13px;font-weight:bold;color:#fff;letter-spacing:-0.5px">NON_RES</div></div>
<svg class="ab" style="left:897px;top:315px" width="18" height="18" viewBox="0 0 18 18">
<defs><radialGradient id="gl" cx="0.55" cy="0.4" r="0.65"><stop offset="0" stop-color="#d8f2fc"/><stop offset="0.6" stop-color="#a8dcf6"/><stop offset="1" stop-color="#6ab8ec"/></radialGradient></defs>
<circle cx="8.5" cy="9" r="8.2" fill="url(#gl)"/>
<path d="M1.5 6 Q3 2.5 6 1.5 L7 4 Q5 6 4.5 8 Q3 12 6 15 Q8 17 9 16.8 Q4 17 1.5 13 Q0 9 1.5 6Z" fill="#1a5ae0"/>
<path d="M16.5 9 Q16 14 11 16.5 Q12 13 12.5 11 Q14.5 9.5 16.5 9Z" fill="#1a50d8"/>
<path d="M6 1.5 Q9 0.5 11 1.5 Q9 2.5 8 4Z" fill="#2a70e8"/>
<path d="M5.5 6.8 Q7 7.2 8 7.6" stroke="#2a6ab0" stroke-width="0.9" fill="none"/>
</svg>
<svg class="ab" style="left:915px;top:316px" width="18" height="16" viewBox="0 0 18 16">
<polygon points="2.5,5 9,1 15.5,5 16.5,8.5 16.5,11 10,15.5 1,12.5 0.5,10 2,8" fill="#1a2410"/>
<polygon points="0.8,9.8 9.5,12.5 10,15.5 2,13 0.3,11" fill="#ecebf0"/>
<polygon points="9.8,12.4 16.2,8.8 16.3,11.2 10.2,15" fill="#9a98a8"/>
<polygon points="2.5,5 9,1 15.5,5 9,9.5" fill="#f0ec10"/>
<path d="M2.5 5 L9 1 L15.5 5 M0.5 10 L0.8 12 L3 13.5 L9.5 15.8 M16.5 8.5 L16.5 11.5 L10.5 15.5" fill="none" stroke="#100808" stroke-width="1" stroke-dasharray="1.1 0.8"/>
<circle cx="10" cy="14.6" r="1.4" fill="#1a0a08"/><circle cx="16" cy="11.6" r="1.3" fill="#1a0a08"/>
</svg>
<div class="ab" style="left:1148px;top:314px;width:248px;height:77px;background:#f4a460"></div>
<div class="ab" style="left:1150px;top:340px;white-space:nowrap;font-size:12px;font-weight:bold;color:#000;letter-spacing:-0.12px">DemoLastName, DemoUser</div>
<div class="ab" style="left:1358px;top:314px;width:39px;height:13px;background:linear-gradient(#20b040,#0a9028);overflow:hidden;border-radius:1px"><div class="ab" style="left:1px;top:5px;width:1px;height:2px;background:#dfe"></div><div class="ab" style="left:1px;top:9px;width:1px;height:2px;background:#dfe"></div><div class="ab" style="left:4px;top:1px;white-space:nowrap;font-size:10.5px;line-height:13px;font-weight:bold;color:#fff;letter-spacing:-0.5px">NON_RES</div></div>
<svg class="ab" style="left:1147px;top:315px" width="18" height="18" viewBox="0 0 18 18">
<defs><radialGradient id="gl" cx="0.55" cy="0.4" r="0.65"><stop offset="0" stop-color="#d8f2fc"/><stop offset="0.6" stop-color="#a8dcf6"/><stop offset="1" stop-color="#6ab8ec"/></radialGradient></defs>
<circle cx="8.5" cy="9" r="8.2" fill="url(#gl)"/>
<path d="M1.5 6 Q3 2.5 6 1.5 L7 4 Q5 6 4.5 8 Q3 12 6 15 Q8 17 9 16.8 Q4 17 1.5 13 Q0 9 1.5 6Z" fill="#1a5ae0"/>
<path d="M16.5 9 Q16 14 11 16.5 Q12 13 12.5 11 Q14.5 9.5 16.5 9Z" fill="#1a50d8"/>
<path d="M6 1.5 Q9 0.5 11 1.5 Q9 2.5 8 4Z" fill="#2a70e8"/>
<path d="M5.5 6.8 Q7 7.2 8 7.6" stroke="#2a6ab0" stroke-width="0.9" fill="none"/>
</svg>
<svg class="ab" style="left:1165px;top:316px" width="18" height="16" viewBox="0 0 18 16">
<polygon points="2.5,5 9,1 15.5,5 16.5,8.5 16.5,11 10,15.5 1,12.5 0.5,10 2,8" fill="#1a2410"/>
<polygon points="0.8,9.8 9.5,12.5 10,15.5 2,13 0.3,11" fill="#ecebf0"/>
<polygon points="9.8,12.4 16.2,8.8 16.3,11.2 10.2,15" fill="#9a98a8"/>
<polygon points="2.5,5 9,1 15.5,5 9,9.5" fill="#f0ec10"/>
<path d="M2.5 5 L9 1 L15.5 5 M0.5 10 L0.8 12 L3 13.5 L9.5 15.8 M16.5 8.5 L16.5 11.5 L10.5 15.5" fill="none" stroke="#100808" stroke-width="1" stroke-dasharray="1.1 0.8"/>
<circle cx="10" cy="14.6" r="1.4" fill="#1a0a08"/><circle cx="16" cy="11.6" r="1.3" fill="#1a0a08"/>
</svg>
<div class="ab" style="left:646px;top:313px;width:2px;height:78px;background:#fbfbf8"></div>
<div class="ab" style="left:896px;top:313px;width:2px;height:78px;background:#fbfbf8"></div>
<div class="ab" style="left:1146px;top:313px;width:2px;height:78px;background:#fbfbf8"></div>
<div class="ab" style="left:397px;top:313px;width:1px;height:79px;background:#d0d0d0"></div>
<div class="ab" style="left:288px;top:393px;width:69px;height:79px;background:#000"></div>
<div class="ab c" style="left:293px;top:398px;width:59px;height:69px;border-radius:4px;background:linear-gradient(#fafcff,#e8f2fc 35%,#a8d0f8);font-size:12.5px;font-weight:bold;color:#000">05:48 PM</div>
<div class="ab" style="left:357px;top:393px;width:40px;height:79px;background:#fff"></div>
<div class="ab c" style="left:357px;top:393px;width:40px;height:79px;font-size:12.5px;font-weight:bold">1</div>
<div class="ab" style="left:357px;top:471px;width:1040px;height:2px;background:#f6f6f4"></div>
<div class="ab" style="left:288px;top:472px;width:69px;height:1px;background:#d8d8d8"></div>
<div class="ab" style="left:398px;top:394px;width:248px;height:77px;background:#f4a460"></div>
<div class="ab" style="left:400px;top:420px;white-space:nowrap;font-size:12px;font-weight:bold;color:#000;letter-spacing:-0.12px">DemoLastName, DemoUser</div>
<div class="ab" style="left:608px;top:394px;width:39px;height:13px;background:linear-gradient(#20b040,#0a9028);overflow:hidden;border-radius:1px"><div class="ab" style="left:1px;top:5px;width:1px;height:2px;background:#dfe"></div><div class="ab" style="left:1px;top:9px;width:1px;height:2px;background:#dfe"></div><div class="ab" style="left:4px;top:1px;white-space:nowrap;font-size:10.5px;line-height:13px;font-weight:bold;color:#fff;letter-spacing:-0.5px">NON_RES</div></div>
<svg class="ab" style="left:397px;top:396px" width="18" height="16" viewBox="0 0 18 16">
<polygon points="2.5,5 9,1 15.5,5 16.5,8.5 16.5,11 10,15.5 1,12.5 0.5,10 2,8" fill="#1a2410"/>
<polygon points="0.8,9.8 9.5,12.5 10,15.5 2,13 0.3,11" fill="#ecebf0"/>
<polygon points="9.8,12.4 16.2,8.8 16.3,11.2 10.2,15" fill="#9a98a8"/>
<polygon points="2.5,5 9,1 15.5,5 9,9.5" fill="#f0ec10"/>
<path d="M2.5 5 L9 1 L15.5 5 M0.5 10 L0.8 12 L3 13.5 L9.5 15.8 M16.5 8.5 L16.5 11.5 L10.5 15.5" fill="none" stroke="#100808" stroke-width="1" stroke-dasharray="1.1 0.8"/>
<circle cx="10" cy="14.6" r="1.4" fill="#1a0a08"/><circle cx="16" cy="11.6" r="1.3" fill="#1a0a08"/>
</svg>
<div class="ab" style="left:648px;top:394px;width:248px;height:77px;background:#f4a460"></div>
<div class="ab" style="left:650px;top:420px;white-space:nowrap;font-size:12px;font-weight:bold;color:#000;letter-spacing:-0.12px">DemoLastName, DemoUser</div>
<div class="ab" style="left:858px;top:394px;width:39px;height:13px;background:linear-gradient(#20b040,#0a9028);overflow:hidden;border-radius:1px"><div class="ab" style="left:1px;top:5px;width:1px;height:2px;background:#dfe"></div><div class="ab" style="left:1px;top:9px;width:1px;height:2px;background:#dfe"></div><div class="ab" style="left:4px;top:1px;white-space:nowrap;font-size:10.5px;line-height:13px;font-weight:bold;color:#fff;letter-spacing:-0.5px">NON_RES</div></div>
<svg class="ab" style="left:647px;top:396px" width="18" height="16" viewBox="0 0 18 16">
<polygon points="2.5,5 9,1 15.5,5 16.5,8.5 16.5,11 10,15.5 1,12.5 0.5,10 2,8" fill="#1a2410"/>
<polygon points="0.8,9.8 9.5,12.5 10,15.5 2,13 0.3,11" fill="#ecebf0"/>
<polygon points="9.8,12.4 16.2,8.8 16.3,11.2 10.2,15" fill="#9a98a8"/>
<polygon points="2.5,5 9,1 15.5,5 9,9.5" fill="#f0ec10"/>
<path d="M2.5 5 L9 1 L15.5 5 M0.5 10 L0.8 12 L3 13.5 L9.5 15.8 M16.5 8.5 L16.5 11.5 L10.5 15.5" fill="none" stroke="#100808" stroke-width="1" stroke-dasharray="1.1 0.8"/>
<circle cx="10" cy="14.6" r="1.4" fill="#1a0a08"/><circle cx="16" cy="11.6" r="1.3" fill="#1a0a08"/>
</svg>
<div class="ab" style="left:898px;top:394px;width:248px;height:77px;background:#f4a460"></div>
<div class="ab" style="left:900px;top:420px;white-space:nowrap;font-size:12px;font-weight:bold;color:#000;letter-spacing:-0.12px">DemoLastName, DemoUser</div>
<div class="ab" style="left:1108px;top:394px;width:39px;height:13px;background:linear-gradient(#20b040,#0a9028);overflow:hidden;border-radius:1px"><div class="ab" style="left:1px;top:5px;width:1px;height:2px;background:#dfe"></div><div class="ab" style="left:1px;top:9px;width:1px;height:2px;background:#dfe"></div><div class="ab" style="left:4px;top:1px;white-space:nowrap;font-size:10.5px;line-height:13px;font-weight:bold;color:#fff;letter-spacing:-0.5px">NON_RES</div></div>
<svg class="ab" style="left:897px;top:396px" width="18" height="16" viewBox="0 0 18 16">
<polygon points="2.5,5 9,1 15.5,5 16.5,8.5 16.5,11 10,15.5 1,12.5 0.5,10 2,8" fill="#1a2410"/>
<polygon points="0.8,9.8 9.5,12.5 10,15.5 2,13 0.3,11" fill="#ecebf0"/>
<polygon points="9.8,12.4 16.2,8.8 16.3,11.2 10.2,15" fill="#9a98a8"/>
<polygon points="2.5,5 9,1 15.5,5 9,9.5" fill="#f0ec10"/>
<path d="M2.5 5 L9 1 L15.5 5 M0.5 10 L0.8 12 L3 13.5 L9.5 15.8 M16.5 8.5 L16.5 11.5 L10.5 15.5" fill="none" stroke="#100808" stroke-width="1" stroke-dasharray="1.1 0.8"/>
<circle cx="10" cy="14.6" r="1.4" fill="#1a0a08"/><circle cx="16" cy="11.6" r="1.3" fill="#1a0a08"/>
</svg>
<div class="ab" style="left:1148px;top:394px;width:248px;height:77px;background:#f4a460"></div>
<div class="ab" style="left:1150px;top:420px;white-space:nowrap;font-size:12px;font-weight:bold;color:#000;letter-spacing:-0.12px">DemoLastName, DemoUser</div>
<div class="ab" style="left:1358px;top:394px;width:39px;height:13px;background:linear-gradient(#20b040,#0a9028);overflow:hidden;border-radius:1px"><div class="ab" style="left:1px;top:5px;width:1px;height:2px;background:#dfe"></div><div class="ab" style="left:1px;top:9px;width:1px;height:2px;background:#dfe"></div><div class="ab" style="left:4px;top:1px;white-space:nowrap;font-size:10.5px;line-height:13px;font-weight:bold;color:#fff;letter-spacing:-0.5px">NON_RES</div></div>
<svg class="ab" style="left:1147px;top:396px" width="18" height="16" viewBox="0 0 18 16">
<polygon points="2.5,5 9,1 15.5,5 16.5,8.5 16.5,11 10,15.5 1,12.5 0.5,10 2,8" fill="#1a2410"/>
<polygon points="0.8,9.8 9.5,12.5 10,15.5 2,13 0.3,11" fill="#ecebf0"/>
<polygon points="9.8,12.4 16.2,8.8 16.3,11.2 10.2,15" fill="#9a98a8"/>
<polygon points="2.5,5 9,1 15.5,5 9,9.5" fill="#f0ec10"/>
<path d="M2.5 5 L9 1 L15.5 5 M0.5 10 L0.8 12 L3 13.5 L9.5 15.8 M16.5 8.5 L16.5 11.5 L10.5 15.5" fill="none" stroke="#100808" stroke-width="1" stroke-dasharray="1.1 0.8"/>
<circle cx="10" cy="14.6" r="1.4" fill="#1a0a08"/><circle cx="16" cy="11.6" r="1.3" fill="#1a0a08"/>
</svg>
<div class="ab" style="left:646px;top:393px;width:2px;height:78px;background:#fbfbf8"></div>
<div class="ab" style="left:896px;top:393px;width:2px;height:78px;background:#fbfbf8"></div>
<div class="ab" style="left:1146px;top:393px;width:2px;height:78px;background:#fbfbf8"></div>
<div class="ab" style="left:397px;top:393px;width:1px;height:79px;background:#d0d0d0"></div>
<div class="ab" style="left:288px;top:473px;width:69px;height:79px;background:#000"></div>
<div class="ab c" style="left:293px;top:478px;width:59px;height:69px;border-radius:4px;background:linear-gradient(#fafcff,#e8f2fc 35%,#a8d0f8);font-size:12.5px;font-weight:bold;color:#000">06:00 PM</div>
<div class="ab" style="left:357px;top:473px;width:40px;height:79px;background:#fff"></div>
<div class="ab c" style="left:357px;top:473px;width:40px;height:79px;font-size:12.5px;font-weight:bold">1</div>
<div class="ab" style="left:357px;top:551px;width:1040px;height:2px;background:#f6f6f4"></div>
<div class="ab" style="left:288px;top:552px;width:69px;height:1px;background:#d8d8d8"></div>
<div class="ab" style="left:398px;top:474px;width:248px;height:77px;background:#f4a460"></div>
<div class="ab" style="left:400px;top:500px;white-space:nowrap;font-size:12px;font-weight:bold;color:#000;letter-spacing:-0.12px">DemoLastName, DemoUser</div>
<div class="ab" style="left:608px;top:474px;width:39px;height:13px;background:linear-gradient(#20b040,#0a9028);overflow:hidden;border-radius:1px"><div class="ab" style="left:1px;top:5px;width:1px;height:2px;background:#dfe"></div><div class="ab" style="left:1px;top:9px;width:1px;height:2px;background:#dfe"></div><div class="ab" style="left:4px;top:1px;white-space:nowrap;font-size:10.5px;line-height:13px;font-weight:bold;color:#fff;letter-spacing:-0.5px">NON_RES</div></div>
<svg class="ab" style="left:400px;top:476px" width="13" height="18" viewBox="0 0 13 18">
<rect x="0.5" y="1" width="12" height="16.5" fill="#fff" stroke="#e8e8e8" stroke-width="0.6"/>
<rect x="2.5" y="4" width="8" height="11" fill="#707a84"/>
<rect x="2.5" y="15.5" width="8" height="1" fill="#555"/>
</svg>
<svg class="ab" style="left:415px;top:476px" width="18" height="16" viewBox="0 0 18 16">
<polygon points="2.5,5 9,1 15.5,5 16.5,8.5 16.5,11 10,15.5 1,12.5 0.5,10 2,8" fill="#1a2410"/>
<polygon points="0.8,9.8 9.5,12.5 10,15.5 2,13 0.3,11" fill="#ecebf0"/>
<polygon points="9.8,12.4 16.2,8.8 16.3,11.2 10.2,15" fill="#9a98a8"/>
<polygon points="2.5,5 9,1 15.5,5 9,9.5" fill="#f0ec10"/>
<path d="M2.5 5 L9 1 L15.5 5 M0.5 10 L0.8 12 L3 13.5 L9.5 15.8 M16.5 8.5 L16.5 11.5 L10.5 15.5" fill="none" stroke="#100808" stroke-width="1" stroke-dasharray="1.1 0.8"/>
<circle cx="10" cy="14.6" r="1.4" fill="#1a0a08"/><circle cx="16" cy="11.6" r="1.3" fill="#1a0a08"/>
</svg>
<div class="ab" style="left:648px;top:474px;width:248px;height:77px;background:#f4a460"></div>
<div class="ab" style="left:650px;top:500px;white-space:nowrap;font-size:12px;font-weight:bold;color:#000;letter-spacing:-0.12px">DemoLastName, DemoUser</div>
<div class="ab" style="left:858px;top:474px;width:39px;height:13px;background:linear-gradient(#20b040,#0a9028);overflow:hidden;border-radius:1px"><div class="ab" style="left:1px;top:5px;width:1px;height:2px;background:#dfe"></div><div class="ab" style="left:1px;top:9px;width:1px;height:2px;background:#dfe"></div><div class="ab" style="left:4px;top:1px;white-space:nowrap;font-size:10.5px;line-height:13px;font-weight:bold;color:#fff;letter-spacing:-0.5px">NON_RES</div></div>
<svg class="ab" style="left:650px;top:476px" width="13" height="18" viewBox="0 0 13 18">
<rect x="0.5" y="1" width="12" height="16.5" fill="#fff" stroke="#e8e8e8" stroke-width="0.6"/>
<rect x="2.5" y="4" width="8" height="11" fill="#707a84"/>
<rect x="2.5" y="15.5" width="8" height="1" fill="#555"/>
</svg>
<svg class="ab" style="left:665px;top:476px" width="18" height="16" viewBox="0 0 18 16">
<polygon points="2.5,5 9,1 15.5,5 16.5,8.5 16.5,11 10,15.5 1,12.5 0.5,10 2,8" fill="#1a2410"/>
<polygon points="0.8,9.8 9.5,12.5 10,15.5 2,13 0.3,11" fill="#ecebf0"/>
<polygon points="9.8,12.4 16.2,8.8 16.3,11.2 10.2,15" fill="#9a98a8"/>
<polygon points="2.5,5 9,1 15.5,5 9,9.5" fill="#f0ec10"/>
<path d="M2.5 5 L9 1 L15.5 5 M0.5 10 L0.8 12 L3 13.5 L9.5 15.8 M16.5 8.5 L16.5 11.5 L10.5 15.5" fill="none" stroke="#100808" stroke-width="1" stroke-dasharray="1.1 0.8"/>
<circle cx="10" cy="14.6" r="1.4" fill="#1a0a08"/><circle cx="16" cy="11.6" r="1.3" fill="#1a0a08"/>
</svg>
<div class="ab" style="left:898px;top:474px;width:248px;height:77px;background:#f4a460"></div>
<div class="ab" style="left:900px;top:500px;white-space:nowrap;font-size:12px;font-weight:bold;color:#000;letter-spacing:-0.12px">DemoLastName, DemoUser</div>
<div class="ab" style="left:1108px;top:474px;width:39px;height:13px;background:linear-gradient(#20b040,#0a9028);overflow:hidden;border-radius:1px"><div class="ab" style="left:1px;top:5px;width:1px;height:2px;background:#dfe"></div><div class="ab" style="left:1px;top:9px;width:1px;height:2px;background:#dfe"></div><div class="ab" style="left:4px;top:1px;white-space:nowrap;font-size:10.5px;line-height:13px;font-weight:bold;color:#fff;letter-spacing:-0.5px">NON_RES</div></div>
<svg class="ab" style="left:900px;top:476px" width="13" height="18" viewBox="0 0 13 18">
<rect x="0.5" y="1" width="12" height="16.5" fill="#fff" stroke="#e8e8e8" stroke-width="0.6"/>
<rect x="2.5" y="4" width="8" height="11" fill="#707a84"/>
<rect x="2.5" y="15.5" width="8" height="1" fill="#555"/>
</svg>
<svg class="ab" style="left:915px;top:476px" width="18" height="16" viewBox="0 0 18 16">
<polygon points="2.5,5 9,1 15.5,5 16.5,8.5 16.5,11 10,15.5 1,12.5 0.5,10 2,8" fill="#1a2410"/>
<polygon points="0.8,9.8 9.5,12.5 10,15.5 2,13 0.3,11" fill="#ecebf0"/>
<polygon points="9.8,12.4 16.2,8.8 16.3,11.2 10.2,15" fill="#9a98a8"/>
<polygon points="2.5,5 9,1 15.5,5 9,9.5" fill="#f0ec10"/>
<path d="M2.5 5 L9 1 L15.5 5 M0.5 10 L0.8 12 L3 13.5 L9.5 15.8 M16.5 8.5 L16.5 11.5 L10.5 15.5" fill="none" stroke="#100808" stroke-width="1" stroke-dasharray="1.1 0.8"/>
<circle cx="10" cy="14.6" r="1.4" fill="#1a0a08"/><circle cx="16" cy="11.6" r="1.3" fill="#1a0a08"/>
</svg>
<div class="ab" style="left:1148px;top:474px;width:248px;height:77px;background:#f4a460"></div>
<div class="ab" style="left:1150px;top:500px;white-space:nowrap;font-size:12px;font-weight:bold;color:#000;letter-spacing:-0.12px">DemoLastName, DemoUser</div>
<div class="ab" style="left:1358px;top:474px;width:39px;height:13px;background:linear-gradient(#20b040,#0a9028);overflow:hidden;border-radius:1px"><div class="ab" style="left:1px;top:5px;width:1px;height:2px;background:#dfe"></div><div class="ab" style="left:1px;top:9px;width:1px;height:2px;background:#dfe"></div><div class="ab" style="left:4px;top:1px;white-space:nowrap;font-size:10.5px;line-height:13px;font-weight:bold;color:#fff;letter-spacing:-0.5px">NON_RES</div></div>
<svg class="ab" style="left:1150px;top:476px" width="13" height="18" viewBox="0 0 13 18">
<rect x="0.5" y="1" width="12" height="16.5" fill="#fff" stroke="#e8e8e8" stroke-width="0.6"/>
<rect x="2.5" y="4" width="8" height="11" fill="#707a84"/>
<rect x="2.5" y="15.5" width="8" height="1" fill="#555"/>
</svg>
<svg class="ab" style="left:1165px;top:476px" width="18" height="16" viewBox="0 0 18 16">
<polygon points="2.5,5 9,1 15.5,5 16.5,8.5 16.5,11 10,15.5 1,12.5 0.5,10 2,8" fill="#1a2410"/>
<polygon points="0.8,9.8 9.5,12.5 10,15.5 2,13 0.3,11" fill="#ecebf0"/>
<polygon points="9.8,12.4 16.2,8.8 16.3,11.2 10.2,15" fill="#9a98a8"/>
<polygon points="2.5,5 9,1 15.5,5 9,9.5" fill="#f0ec10"/>
<path d="M2.5 5 L9 1 L15.5 5 M0.5 10 L0.8 12 L3 13.5 L9.5 15.8 M16.5 8.5 L16.5 11.5 L10.5 15.5" fill="none" stroke="#100808" stroke-width="1" stroke-dasharray="1.1 0.8"/>
<circle cx="10" cy="14.6" r="1.4" fill="#1a0a08"/><circle cx="16" cy="11.6" r="1.3" fill="#1a0a08"/>
</svg>
<div class="ab" style="left:646px;top:473px;width:2px;height:78px;background:#fbfbf8"></div>
<div class="ab" style="left:896px;top:473px;width:2px;height:78px;background:#fbfbf8"></div>
<div class="ab" style="left:1146px;top:473px;width:2px;height:78px;background:#fbfbf8"></div>
<div class="ab" style="left:397px;top:473px;width:1px;height:79px;background:#d0d0d0"></div>
<div class="ab" style="left:1147px;top:313px;width:249px;height:79px;border:1px solid #000"></div>
<div class="ab" style="left:288px;top:553px;width:1109px;height:22px;background:#f0f0f0"></div>
<div class="ab" style="left:288px;top:575px;width:1126px;height:28px;background:linear-gradient(#f4f8fc,#e6f0fa)"></div>
<div class="ab" style="left:289px;top:578px;width:30px;height:21px;background:#dfe3e8;border:1px solid #9aa0a8"></div>
<svg class="ab" style="left:292px;top:579px" width="24" height="19" viewBox="0 0 24 19"><defs><linearGradient id="ag289" x1="0" y1="0" x2="0" y2="1"><stop offset="0" stop-color="#58b8f8"/><stop offset="1" stop-color="#1a70d0"/></linearGradient></defs><polygon points="3,4 21,4 12,15" fill="url(#ag289)" stroke="#2a80d0" stroke-width="0.6"/></svg>
<div class="ab" style="left:323px;top:578px;width:30px;height:21px;background:#dfe3e8;border:1px solid #9aa0a8"></div>
<svg class="ab" style="left:326px;top:579px" width="24" height="19" viewBox="0 0 24 19"><defs><linearGradient id="ag323" x1="0" y1="0" x2="0" y2="1"><stop offset="0" stop-color="#58b8f8"/><stop offset="1" stop-color="#1a70d0"/></linearGradient></defs><polygon points="3,15 21,15 12,4" fill="url(#ag323)" stroke="#2a80d0" stroke-width="0.6"/></svg>
<div class="ab" style="left:1369px;top:582px;white-space:nowrap;font-size:11.2px;color:#2a4070">0 Cell(s)</div>
<div class="ab" style="left:288px;top:603px;width:1126px;height:24px;background:#d8e8f8"></div>
<div class="ab" style="left:288px;top:626px;width:1126px;height:1px;background:#a0a8b0"></div>
<div class="ab" style="left:409px;top:605px;width:118px;height:22px;background:linear-gradient(#f0f4f8,#dce4ee);border:1px solid #a8b0b8;border-bottom:none"></div>
<div class="ab" style="left:527px;top:605px;width:121px;height:22px;background:linear-gradient(#f0f4f8,#dce4ee);border:1px solid #a8b0b8;border-bottom:none"></div>
<div class="ab" style="left:289px;top:603px;width:120px;height:24px;background:#fff;border:1px solid #a8b0b8;border-bottom:none"></div>
<div class="ab c" style="left:289px;top:604px;width:120px;height:22px;font-size:11.5px;color:#000">Cell Info</div>
<div class="ab c" style="left:409px;top:606px;width:118px;height:20px;font-size:11.5px;color:#000">Summary</div>
<div class="ab c" style="left:527px;top:606px;width:121px;height:20px;font-size:11.5px;color:#000">Data Capture</div>
<div class="ab" style="left:289px;top:627px;width:1125px;height:169px;background:#c8dcf2;border-right:1px solid #e8eef4"></div>
<div class="ab" style="left:294px;top:633px;white-space:nowrap;font-size:11.5px;color:#1a1a1a">Name</div>
<div class="ab" style="left:394px;top:633px;white-space:nowrap;font-size:11.5px;font-weight:bold;color:#000">DemoUser DemoLastName</div>
<div class="ab" style="left:294px;top:654px;white-space:nowrap;font-size:11.5px;color:#1a1a1a">Class Description</div>
<div class="ab" style="left:394px;top:654px;white-space:nowrap;font-size:11.5px;font-weight:bold;color:#000">Retail</div>
<div class="ab" style="left:294px;top:675px;white-space:nowrap;font-size:11.5px;color:#1a1a1a">Rate code</div>
<div class="ab" style="left:394px;top:675px;white-space:nowrap;font-size:11.5px;font-weight:bold;color:#000">LR NON_RES</div>
<div class="ab" style="left:294px;top:696px;white-space:nowrap;font-size:11.5px;color:#1a1a1a">Holes</div>
<div class="ab" style="left:394px;top:696px;white-space:nowrap;font-size:11.5px;font-weight:bold;color:#000">18</div>
<div class="ab" style="left:294px;top:738px;white-space:nowrap;font-size:11.5px;color:#1a1a1a">Product code</div>
<div class="ab" style="left:394px;top:738px;white-space:nowrap;font-size:11.5px;font-weight:bold;color:#000">GF2141, CF2203</div>
<div class="ab" style="left:815px;top:633px;white-space:nowrap;font-size:11.5px;color:#1a1a1a">Confirmation Key</div>
<div class="ab" style="left:915px;top:633px;white-space:nowrap;font-size:11.5px;font-weight:bold;color:#000">380476</div>
<div class="ab" style="left:815px;top:654px;white-space:nowrap;font-size:11.5px;color:#1a1a1a">Notes</div>
<div class="ab" style="left:815px;top:675px;white-space:nowrap;font-size:11.5px;color:#1a1a1a">Phone</div>
<div class="ab" style="left:815px;top:696px;white-space:nowrap;font-size:11.5px;color:#1a1a1a">Email</div>
<div class="ab" style="left:915px;top:696px;white-space:nowrap;font-size:11.5px;font-weight:bold;color:#000">demouser@mycostech.com</div>
<div class="ab" style="left:815px;top:715px;white-space:nowrap;font-size:11.5px;color:#1a1a1a">City</div>
<div class="ab" style="left:1350px;top:735px;white-space:nowrap;font-size:11.9px;color:#1a2ad0;text-decoration:underline">Cell History</div>
<div class="ab" style="left:284px;top:796px;width:1132px;height:41px;background:#dce8f6"></div>
<div class="ab" style="left:287px;top:799px;width:149px;height:34px;background:#dcdcdc;border:1px solid #8a8070"></div>
<div class="ab c" style="left:287px;top:800px;width:149px;height:34px;font-size:14px;font-weight:bold">Multiple Templates</div>
<div class="ab" style="left:438px;top:799px;width:796px;height:34px;background:#f4f4f4;border:1px solid #c8c0b0;border-bottom:2px solid #c8b8a0"></div>
<div class="ab c" style="left:438px;top:799px;width:796px;height:34px;font-size:13px;font-weight:bold;color:#707070">Check In</div>
<div class="ab" style="left:1236px;top:799px;width:179px;height:34px;background:#dcdcdc;border:1px solid #8a8070"></div>
<div class="ab c" style="left:1236px;top:799px;width:179px;height:34px;font-size:13.5px;font-weight:bold">POS</div>
<div class="ab" style="left:287px;top:79px;width:1px;height:720px;background:#9a9a9a"></div>
<div class="ab" style="left:1414px;top:79px;width:1px;height:758px;background:#8a9490"></div>
<div class="ab" style="left:1415px;top:76px;width:183px;height:762px;background:#d8e6f6"></div>
<div class="ab" style="left:1417px;top:78px;width:181px;height:25px;background:#eef6fc;border:2px solid #20c0c8"></div>
<div class="ab" style="left:1422px;top:84px;white-space:nowrap;font-size:11.8px;font-weight:bold;color:#2a8a90">Gadget Calendar</div>
<div class="ab" style="left:1418px;top:106px;width:180px;height:161px;background:#fff;border:1px solid #a8b8cc;border-radius:3px"></div>
<div class="ab" style="left:1420px;top:108px;width:176px;height:24px;background:linear-gradient(#e4e8ee,#eef0f4)"></div>
<svg class="ab" style="left:1433px;top:114px" width="8" height="12" viewBox="0 0 8 12"><polygon points="7,1 7,11 1,6" fill="#222"/></svg>
<svg class="ab" style="left:1573px;top:114px" width="8" height="12" viewBox="0 0 8 12"><polygon points="1,1 1,11 7,6" fill="#222"/></svg>
<div class="ab c" style="left:1460px;top:108px;width:96px;height:24px;font-size:11.5px;font-weight:bold;color:#222">May 2021</div>
<div class="ab c" style="left:1425.8px;top:140px;width:24px;height:16px;font-size:10.5px;font-weight:bold;color:#222">Su</div>
<div class="ab c" style="left:1446.8px;top:140px;width:24px;height:16px;font-size:10.5px;font-weight:bold;color:#222">Mo</div>
<div class="ab c" style="left:1467.5px;top:140px;width:24px;height:16px;font-size:10.5px;font-weight:bold;color:#222">Tu</div>
<div class="ab c" style="left:1488.3px;top:140px;width:24px;height:16px;font-size:10.5px;font-weight:bold;color:#222">We</div>
<div class="ab c" style="left:1509px;top:140px;width:24px;height:16px;font-size:10.5px;font-weight:bold;color:#222">Th</div>
<div class="ab c" style="left:1529.8px;top:140px;width:24px;height:16px;font-size:10.5px;font-weight:bold;color:#222">Fr</div>
<div class="ab c" style="left:1550.5px;top:140px;width:24px;height:16px;font-size:10.5px;font-weight:bold;color:#222">Sa</div>
<div class="ab c" style="left:1425.8px;top:158.7px;width:24px;height:16px;font-size:10.5px;color:#707070">25</div>
<div class="ab c" style="left:1446.8px;top:158.7px;width:24px;height:16px;font-size:10.5px;color:#707070">26</div>
<div class="ab c" style="left:1467.5px;top:158.7px;width:24px;height:16px;font-size:10.5px;color:#707070">27</div>
<div class="ab c" style="left:1488.3px;top:158.7px;width:24px;height:16px;font-size:10.5px;color:#707070">28</div>
<div class="ab c" style="left:1509px;top:158.7px;width:24px;height:16px;font-size:10.5px;color:#707070">29</div>
<div class="ab c" style="left:1529.8px;top:158.7px;width:24px;height:16px;font-size:10.5px;color:#707070">30</div>
<div class="ab c" style="left:1550.5px;top:158.7px;width:24px;height:16px;font-size:10.5px;color:#202020">1</div>
<div class="ab c" style="left:1425.8px;top:174.4px;width:24px;height:16px;font-size:10.5px;color:#202020">2</div>
<div class="ab c" style="left:1446.8px;top:174.4px;width:24px;height:16px;font-size:10.5px;color:#202020">3</div>
<div class="ab c" style="left:1467.5px;top:174.4px;width:24px;height:16px;font-size:10.5px;color:#202020">4</div>
<div class="ab c" style="left:1488.3px;top:174.4px;width:24px;height:16px;font-size:10.5px;color:#202020">5</div>
<div class="ab c" style="left:1509px;top:174.4px;width:24px;height:16px;font-size:10.5px;color:#202020">6</div>
<div class="ab c" style="left:1529.8px;top:174.4px;width:24px;height:16px;font-size:10.5px;color:#202020">7</div>
<div class="ab c" style="left:1550.5px;top:174.4px;width:24px;height:16px;font-size:10.5px;color:#202020">8</div>
<div class="ab c" style="left:1425.8px;top:189.5px;width:24px;height:16px;font-size:10.5px;color:#202020">9</div>
<div class="ab c" style="left:1446.8px;top:189.5px;width:24px;height:16px;font-size:10.5px;color:#202020">10</div>
<div class="ab c" style="left:1467.5px;top:189.5px;width:24px;height:16px;font-size:10.5px;color:#202020">11</div>
<div class="ab c" style="left:1488.3px;top:189.5px;width:24px;height:16px;font-size:10.5px;color:#202020">12</div>
<div class="ab c" style="left:1509px;top:189.5px;width:24px;height:16px;font-size:10.5px;color:#202020">13</div>
<div class="ab c" style="left:1529.8px;top:189.5px;width:24px;height:16px;font-size:10.5px;color:#202020">14</div>
<div class="ab c" style="left:1550.5px;top:189.5px;width:24px;height:16px;font-size:10.5px;color:#202020">15</div>
<div class="ab c" style="left:1425.8px;top:204.2px;width:24px;height:16px;font-size:10.5px;color:#202020">16</div>
<div class="ab c" style="left:1446.8px;top:204.2px;width:24px;height:16px;font-size:10.5px;color:#202020">17</div>
<div class="ab c" style="left:1467.5px;top:204.2px;width:24px;height:16px;font-size:10.5px;color:#202020">18</div>
<div class="ab c" style="left:1488.3px;top:204.2px;width:24px;height:16px;font-size:10.5px;color:#202020">19</div>
<div class="ab c" style="left:1509px;top:204.2px;width:24px;height:16px;font-size:10.5px;color:#202020">20</div>
<div class="ab" style="left:1531px;top:204px;width:21px;height:16px;background:#a8a8a8"></div>
<div class="ab c" style="left:1529.8px;top:204.2px;width:24px;height:16px;font-size:10.5px;color:#fff">21</div>
<div class="ab" style="left:1552px;top:204px;width:21px;height:16px;background:#c8e0ea"></div>
<div class="ab c" style="left:1550.5px;top:204.2px;width:24px;height:16px;font-size:10.5px;color:#202020">22</div>
<div class="ab c" style="left:1425.8px;top:220.2px;width:24px;height:16px;font-size:10.5px;color:#202020">23</div>
<div class="ab c" style="left:1446.8px;top:220.2px;width:24px;height:16px;font-size:10.5px;color:#202020">24</div>
<div class="ab c" style="left:1467.5px;top:220.2px;width:24px;height:16px;font-size:10.5px;color:#202020">25</div>
<div class="ab c" style="left:1488.3px;top:220.2px;width:24px;height:16px;font-size:10.5px;color:#202020">26</div>
<div class="ab c" style="left:1509px;top:220.2px;width:24px;height:16px;font-size:10.5px;color:#202020">27</div>
<div class="ab c" style="left:1529.8px;top:220.2px;width:24px;height:16px;font-size:10.5px;color:#202020">28</div>
<div class="ab c" style="left:1550.5px;top:220.2px;width:24px;height:16px;font-size:10.5px;color:#202020">29</div>
<div class="ab c" style="left:1425.8px;top:235.3px;width:24px;height:16px;font-size:10.5px;color:#202020">30</div>
<div class="ab c" style="left:1446.8px;top:235.3px;width:24px;height:16px;font-size:10.5px;color:#202020">31</div>
<div class="ab c" style="left:1467.5px;top:235.3px;width:24px;height:16px;font-size:10.5px;color:#707070">1</div>
<div class="ab c" style="left:1488.3px;top:235.3px;width:24px;height:16px;font-size:10.5px;color:#707070">2</div>
<div class="ab c" style="left:1509px;top:235.3px;width:24px;height:16px;font-size:10.5px;color:#707070">3</div>
<div class="ab c" style="left:1529.8px;top:235.3px;width:24px;height:16px;font-size:10.5px;color:#707070">4</div>
<div class="ab c" style="left:1550.5px;top:235.3px;width:24px;height:16px;font-size:10.5px;color:#707070">5</div>
<div class="ab" style="left:1418px;top:271px;width:180px;height:26px;background:linear-gradient(90deg,#dfeaf8,#f6f9fd 60%,#e4eef8);border:1px solid #b8cce0"></div>
<div class="ab" style="left:1423px;top:277px;white-space:nowrap;font-size:13.5px;font-weight:bold;color:#1a3a8a">General</div>
<div class="ab" style="left:1580px;top:276px;white-space:nowrap;font-size:14px;color:#1a3a8a">&raquo;</div>
<div class="ab" style="left:1418px;top:297px;width:180px;height:481px;background:#fff;border-left:1px solid #9aa4ae;border-right:1px solid #9aa4ae"></div>
<div class="ab" style="left:1423px;top:299px;width:170px;height:39px;background:#dcdcdc;border:1px solid #6e6e6e"></div>
<div class="ab c" style="left:1423px;top:301px;width:170px;height:39px;font-size:12.5px;font-weight:bold;color:#1a1a1a">Daily Deals</div>
<div class="ab" style="left:1423px;top:343px;width:170px;height:39px;background:#dcdcdc;border:1px solid #6e6e6e"></div>
<div class="ab c" style="left:1423px;top:345px;width:170px;height:39px;font-size:12.5px;font-weight:bold;color:#1a1a1a">Modified Shotgun</div>
<div class="ab" style="left:1423px;top:387px;width:170px;height:39px;background:#dcdcdc;border:1px solid #6e6e6e"></div>
<div class="ab c" style="left:1423px;top:389px;width:170px;height:39px;font-size:12.5px;font-weight:bold;color:#1a1a1a">Print TeeSheet</div>
<div class="ab" style="left:1423px;top:431px;width:170px;height:39px;background:#dcdcdc;border:1px solid #6e6e6e"></div>
<div class="ab c" style="left:1423px;top:433px;width:170px;height:39px;font-size:12.5px;font-weight:bold;color:#1a1a1a">Weather</div>
<div class="ab" style="left:1418px;top:778px;width:180px;height:28px;background:linear-gradient(#fff4dc,#f8b860 45%,#f4a438 60%,#fcd890);border:1px solid #d8a860;border-top:1px solid #9a9a8a"></div>
<div class="ab" style="left:1456px;top:785px;white-space:nowrap;font-size:11.5px;font-weight:bold;color:#2a3a80">General</div>
<div class="ab" style="left:1418px;top:806px;width:180px;height:28px;background:linear-gradient(#e4f0fe,#b4d4fa 50%,#a4c8f6 60%,#c8e0fc);border:1px solid #98b8e0"></div>
<div class="ab" style="left:1455px;top:813px;white-space:nowrap;font-size:11.5px;font-weight:bold;color:#1a3a90">Advance</div>
<div class="ab" style="left:0px;top:837px;width:1600px;height:23px;background:#f0f0f0;border-bottom:1px solid #fafafa"></div>
<div class="ab" style="left:0px;top:840px;width:1483px;height:19px;border-top:1px solid #a8a8a8;border-right:1px solid #fcfcfc"></div>
<div class="ab" style="left:3px;top:843px;white-space:nowrap;font-size:11px;color:#000">Ready</div>
<div class="ab" style="left:1486px;top:840px;width:97px;height:19px;border-top:1px solid #a8a8a8;border-left:1px solid #a8a8a8;border-right:1px solid #fcfcfc"></div>
<div class="ab" style="left:0px;top:860px;width:1600px;height:40px;background:linear-gradient(90deg,#1b1b1b 0px,#1d1c1b 560px,#2e2a24 680px,#463c2f 820px,#4a4032 1000px,#3a3228 1080px,#1c1b1a 1150px,#1a1a1a 1600px)"></div>
<div class="ab" style="left:734px;top:860px;width:48px;height:40px;background:#5c5852"></div>
<div class="ab" style="left:199px;top:897px;width:39px;height:3px;background:#8ccff2"></div>
<div class="ab" style="left:248px;top:897px;width:40px;height:3px;background:#8ccff2"></div>
<div class="ab" style="left:395px;top:897px;width:32px;height:3px;background:#8ccff2"></div>
<div class="ab" style="left:428px;top:897px;width:7px;height:3px;background:#8ccff2"></div>
<div class="ab" style="left:445px;top:897px;width:39px;height:3px;background:#8ccff2"></div>
<div class="ab" style="left:493px;top:897px;width:40px;height:3px;background:#8ccff2"></div>
<div class="ab" style="left:542px;top:897px;width:40px;height:3px;background:#8ccff2"></div>
<div class="ab" style="left:689px;top:897px;width:40px;height:3px;background:#8ccff2"></div>
<div class="ab" style="left:734px;top:897px;width:48px;height:3px;background:#8ccff2"></div>
<svg class="ab" style="left:16px;top:872px" width="16" height="16" viewBox="0 0 16 16"><path d="M0 2.2L6.5 1.3V7.5H0Z M7.5 1.1L16 0V7.5H7.5Z M0 8.5H6.5V14.7L0 13.8Z M7.5 8.5H16V16L7.5 14.9Z" fill="#fff"/></svg>
<svg class="ab" style="left:63px;top:871px" width="18" height="18" viewBox="0 0 18 18"><circle cx="11" cy="7" r="5.2" fill="none" stroke="#fff" stroke-width="1.4"/><line x1="7.3" y1="10.7" x2="1.5" y2="16.5" stroke="#fff" stroke-width="1.5"/></svg>
<svg class="ab" style="left:111px;top:872px" width="18" height="16" viewBox="0 0 18 16"><circle cx="9" cy="8" r="6.6" fill="none" stroke="#fff" stroke-width="2"/></svg>
<svg class="ab" style="left:159px;top:872px" width="18" height="16" viewBox="0 0 18 16"><rect x="2" y="3.5" width="10" height="8" fill="none" stroke="#fff" stroke-width="1.3"/><path d="M0.5 1H13 M0.5 15H13" stroke="#fff" stroke-width="1.3"/><rect x="15" y="5" width="2" height="2" fill="#fff"/><path d="M16 1V3.5 M16 8.5V15" stroke="#fff" stroke-width="1.3"/></svg>
<svg class="ab" style="left:206px;top:868px" width="24" height="24" viewBox="0 0 24 24"><polygon points="8,2 22,4 18,22 2,18" fill="#e8f4f8" stroke="#a8c0c8" stroke-width="0.6"/><polygon points="8,6 20,8 16,20 4,16" fill="#3a8aa8"/><polygon points="10,6 20,8 16,20 12,19" fill="#8ac8e0"/></svg>
<svg class="ab" style="left:256px;top:868px" width="22" height="24" viewBox="0 0 22 24"><circle cx="11" cy="12" r="10" fill="#1ea0e0"/><circle cx="6" cy="6" r="4.5" fill="#1ea0e0"/><circle cx="16" cy="18" r="4.5" fill="#1ea0e0"/><text x="11" y="17" font-family="Liberation Sans" font-size="14" font-weight="bold" fill="#fff" text-anchor="middle">S</text></svg>
<svg class="ab" style="left:305px;top:868px" width="24" height="24" viewBox="0 0 24 24"><circle cx="12" cy="12" r="10.5" fill="none" stroke="#2a78b8" stroke-width="1.6"/><path d="M3 8H21 M3 16H21 M8 8V16 M16 8V16 M12 2V8 M12 16V22" stroke="#2a78b8" stroke-width="1.5"/></svg>
<svg class="ab" style="left:353px;top:868px" width="24" height="24" viewBox="0 0 24 24"><polygon points="16,0.5 16,7 4,16.5 1,15.5" fill="#8a52da"/><polygon points="16,23.5 16,17 4,7.5 1,8.5" fill="#9c66e6"/><polygon points="1,8.5 4,7.5 4,16.5 1,15.5" fill="#9058dc"/><polygon points="16,0.5 23,3.5 23,20.5 16,23.5" fill="#b688f2"/></svg>
<svg class="ab" style="left:402px;top:869px" width="24" height="22" viewBox="0 0 24 22"><path d="M1 3H9L11 5H23V20H1Z" fill="#f0c040"/><rect x="1" y="7" width="22" height="13" fill="#f8d468"/><path d="M7 20V13H17V20H14V16H10V20Z" fill="#2a8ae0"/></svg>
<svg class="ab" style="left:451px;top:868px" width="24" height="24" viewBox="0 0 24 24"><ellipse cx="9" cy="5" rx="5" ry="2.5" fill="#f4d060"/><rect x="4" y="5" width="10" height="11" fill="#f4d060"/><ellipse cx="9" cy="16" rx="5" ry="2.5" fill="#e8c040"/><path d="M17 3H21V7 M3 17V21H7" fill="none" stroke="#40a040" stroke-width="1.6"/><path d="M12 13L20 21 M20 13L12 21" stroke="#2a7ad0" stroke-width="1.6"/></svg>
<svg class="ab" style="left:500px;top:870px" width="24" height="20" viewBox="0 0 24 20"><polygon points="4,1 23,1 20,19 1,19" fill="#4a78d8"/><path d="M6 5L11 9.5L6 14" fill="none" stroke="#fff" stroke-width="1.8"/><path d="M12 14.5H17" stroke="#fff" stroke-width="1.6"/></svg>
<svg class="ab" style="left:549px;top:870px" width="24" height="20" viewBox="0 0 24 20"><rect x="0" y="0" width="24" height="20" fill="#484848"/><rect x="0" y="0" width="24" height="3" fill="#888"/><path d="M3 7L8 10.5L3 14" fill="none" stroke="#fff" stroke-width="1.8"/><path d="M10 15H16" stroke="#fff" stroke-width="1.6"/></svg>
<svg class="ab" style="left:598px;top:868px" width="24" height="23" viewBox="0 0 24 23"><polygon points="0,9 12,1 24,9 24,22 0,22" fill="#1a78d0"/><polygon points="0,9 12,17 24,9 24,22 0,22" fill="#38a8f0"/><polygon points="3,8 21,8 12,14" fill="#e8f4fc"/></svg>
<svg class="ab" style="left:648px;top:871px" width="22" height="18" viewBox="0 0 22 18"><rect x="0" y="0" width="22" height="18" fill="#f0ece4"/><rect x="6" y="2" width="9" height="14" fill="#1a78d8"/><path d="M2 4H4 M2 8H4 M2 12H4 M17 4H20 M17 8H20 M17 12H20" stroke="#666" stroke-width="1"/></svg>
<svg class="ab" style="left:697px;top:869px" width="23" height="23" viewBox="0 0 24 24"><circle cx="12" cy="12" r="11" fill="#e04030"/><path d="M12 12 L21.5 6.5 A11 11 0 0 1 12 23Z" fill="#f8c030"/><path d="M12 12 L12 23 A11 11 0 0 1 2.5 6.5Z" fill="#30a050"/><circle cx="12" cy="12" r="5" fill="#fff"/><circle cx="12" cy="12" r="3.8" fill="#4a88f0"/></svg>
<svg class="ab" style="left:746px;top:868px" width="24" height="24" viewBox="0 0 20 19"><path d="M12.5 3.2 C16 4 18 6.5 18 9.5 C18 13 14.5 15.5 10 15.5 C6.5 15.5 3.5 13.8 2.8 11" fill="none" stroke="#5aa02a" stroke-width="2.6" stroke-linecap="round"/><path d="M2.6 10.5 C2.2 6 5.5 3 10 2.8" fill="none" stroke="#3a7a6a" stroke-width="1.8" stroke-linecap="round"/><path d="M4.5 5 C6 3.5 8 2.8 10.5 2.8" fill="none" stroke="#4a68a8" stroke-width="1.4"/><polygon points="6.5,14.5 9,18.5 11.5,15" fill="#5aa02a"/></svg>
<svg class="ab" style="left:1379px;top:874px" width="14" height="9" viewBox="0 0 14 9"><path d="M1 8L7 2L13 8" fill="none" stroke="#fff" stroke-width="1.3"/></svg>
<svg class="ab" style="left:1402px;top:871px" width="18" height="16" viewBox="0 0 18 16"><path d="M1.5 5.5H4.5L8.5 2V14L4.5 10.5H1.5Z" fill="none" stroke="#fff" stroke-width="1.1"/><path d="M11 5.5L15.5 10 M15.5 5.5L11 10" stroke="#fff" stroke-width="1.1"/></svg>
<svg class="ab" style="left:1427px;top:871px" width="18" height="17" viewBox="0 0 18 17"><path d="M2 14A12 12 0 0 1 14 2 M5 14A9 9 0 0 1 14 5 M8 14A6 6 0 0 1 14 8" fill="none" stroke="#8a8a8a" stroke-width="1.1"/><circle cx="13.5" cy="13.5" r="1.8" fill="#fff"/></svg>
<div class="ab" style="left:1451px;top:872px;white-space:nowrap;font-size:12px;color:#fff">ENG</div>
<div class="ab c" style="left:1484px;top:862px;width:62px;height:18px;font-size:12px;color:#fff">10:33 AM</div>
<div class="ab c" style="left:1484px;top:878px;width:62px;height:18px;font-size:12px;color:#fff">5/21/2021</div>
<svg class="ab" style="left:1558px;top:872px" width="18" height="18" viewBox="0 0 18 18"><path d="M1 1H17V13H8L5 16.5V13H1Z" fill="#fff"/><path d="M4 4.5H14 M4 7H14 M4 9.5H11" stroke="#1a1a1a" stroke-width="1"/></svg>
<div class="ab" style="left:1595px;top:860px;width:1px;height:40px;background:#5a5a5a"></div>
</body></html>
